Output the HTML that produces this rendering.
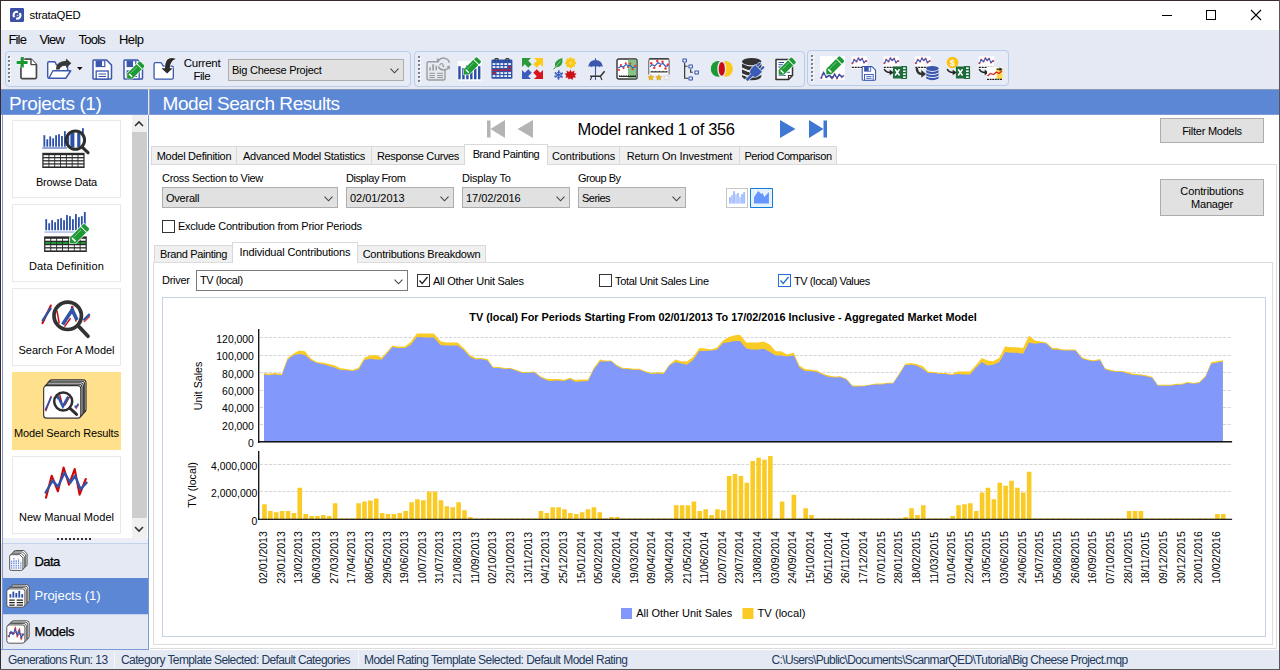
<!DOCTYPE html>
<html><head><meta charset="utf-8"><title>strataQED</title>
<style>
*{box-sizing:border-box;margin:0;padding:0}
html,body{width:1280px;height:670px;overflow:hidden;background:#fff}
body{font-family:"Liberation Sans",sans-serif;font-size:11px;color:#000;position:relative}
.abs{position:absolute}
.t{position:absolute;white-space:nowrap;line-height:1}
#win{position:absolute;left:0;top:0;width:1280px;height:670px;background:#e4e9f3;border-left:1px solid #3a2a2a;border-top:1px solid #3a2a2a}
#titlebar{position:absolute;left:1px;top:1px;width:1278px;height:29px;background:#fff}
#menubar{position:absolute;left:1px;top:30px;width:1278px;height:20px;background:#e4e9f3}
.menu{position:absolute;top:33.4px;font-size:13px;line-height:1;white-space:nowrap}
#toolbar{position:absolute;left:1px;top:50px;width:1278px;height:39px;background:#e4e9f3}
.tbgroup{position:absolute;top:51px;height:36px;border:1px solid #b9cce8;border-radius:4px;background:#e6ebf5}
.grip{position:absolute;top:56px;width:3px;height:27px;background-image:linear-gradient(#7b808e 50%,transparent 50%),linear-gradient(#fff 50%,transparent 50%);background-size:2px 4px,2px 4px;background-position:0 0,1px 1px;background-repeat:repeat-y}
.hdr{position:absolute;top:89px;height:26px;background:linear-gradient(#8d99bb 0,#8d99bb 1px,#5b87d5 1px,#5b87d5 25px,#7c9ad6 25px);color:#fff;font-size:19px;line-height:29px;overflow:hidden;white-space:nowrap}
.ax{font-family:"Liberation Sans",sans-serif;font-size:10.67px;fill:#000}
.ttl{font-family:"Liberation Sans",sans-serif;font-size:10.85px;font-weight:bold;fill:#000}
.item{position:absolute;left:12px;width:109px;height:78px;border:1px solid #e9e9e9;background:#fff}
.item .lbl{position:absolute;left:0;width:100%;top:55px;text-align:center;font-size:11px;line-height:1;white-space:nowrap}
.navbtn{position:absolute;left:3px;width:145px;height:36px;background:#e4e9f3;border-top:1px solid #c3d3ea;font-size:13px}
.navbtn span{position:absolute;left:31.5px;top:10.8px;line-height:1;white-space:nowrap}
.tab{position:absolute;height:18px;top:146px;border:1px solid #d9d9d9;border-bottom:none;background:#f0f0f0;font-size:11px;line-height:1;white-space:nowrap;text-align:center;padding-top:3.5px}
.tab.sel{background:#fff;top:144px;height:21px;z-index:3;padding-top:4px}
.combo{position:absolute;height:21px;border:1px solid #adadad;background:#e1e1e1;font-size:11px}
.combo span{position:absolute;left:3px;top:5px;line-height:1;white-space:nowrap}
.combo svg{position:absolute;right:4.5px;top:7.5px}
.btn{position:absolute;border:1px solid #adadad;background:#e1e1e1;font-size:11px;text-align:center;line-height:13px}
.cb{position:absolute;width:13px;height:13px;border:1px solid #333;background:#fff}
.sb{position:absolute;top:654px;font-size:12px;color:#1e395b;line-height:1;white-space:nowrap}
</style></head>
<body>
<div id="win"></div>
<div id="titlebar"></div>
<!-- app icon -->
<svg class="abs" style="left:10px;top:8px" width="14" height="14" viewBox="0 0 14 14"><rect width="14" height="14" rx="1.2" fill="#3b4fa6"/><circle cx="7" cy="7.2" r="3.5" fill="none" stroke="#fff" stroke-width="2.1"/><path d="M7.2 0.5 L11.6 4.6 L8.4 5.6 Z M6.8 13.8 L2.4 9.8 L5.6 8.8 Z" fill="#3b4fa6"/><circle cx="7.6" cy="7.4" r="0.9" fill="#fff" opacity="0.7"/></svg>
<div class="t" style="letter-spacing:-0.193px;left:29.5px;top:10px;font-size:11.3px">strataQED</div>
<!-- window controls -->
<svg class="abs" style="left:1150px;top:5px" width="125" height="20" viewBox="0 0 125 20"><path d="M12 10.5H22" stroke="#000" stroke-width="1"/><rect x="56.5" y="5.5" width="9" height="9" fill="none" stroke="#000" stroke-width="1"/><path d="M101 5L111 15M111 5L101 15" stroke="#000" stroke-width="1.1"/></svg>

<div id="menubar"></div>
<div class="menu" style="letter-spacing:-0.863px;left:8.5px">File</div>
<div class="menu" style="letter-spacing:-0.863px;left:39.5px">View</div>
<div class="menu" style="letter-spacing:-0.772px;left:78.5px">Tools</div>
<div class="menu" style="letter-spacing:-0.562px;left:119px">Help</div>

<div id="toolbar"></div>
<div class="tbgroup" style="left:5px;width:406px"></div>
<div class="tbgroup" style="left:414px;width:391px"></div>
<div class="tbgroup" style="left:807px;top:50px;width:202px"></div>
<div class="grip" style="left:8px"></div>
<div class="grip" style="left:417.5px"></div>
<div class="grip" style="left:811px;top:55px"></div>
<svg class="abs" style="left:16px;top:56px" width="24" height="25" viewBox="0 0 24 25"><path d="M4.95 3.1 H15 L20.45 8.6 V21.2 Q20.45 22.65 19 22.65 H6.4 Q4.95 22.65 4.95 21.2 Z" fill="#fff" stroke="#484848" stroke-width="1.7" stroke-linejoin="round"/><path d="M15 3.1 V8.6 H20.45" fill="#fff" stroke="#484848" stroke-width="1.4" stroke-linejoin="round"/><path d="M6.3 1 V11.6 M0.7 6.45 H11.6" stroke="#fff" stroke-width="4.2" opacity="0.8"/><path d="M6.3 1 V11.6 M0.7 6.45 H11.6" stroke="#1a9a2e" stroke-width="3"/></svg>
<svg class="abs" style="left:46px;top:56px" width="28" height="25" viewBox="0 0 28 25"><path d="M2.9 22.2 Q1.7 22 1.7 20.5 V6.9 Q1.7 5.7 2.9 5.7 H8 Q9 5.7 9.4 6.6 L10.4 9 H20.4 Q21.6 9 21.6 10.2 V15" fill="#fff" stroke="#3a57ad" stroke-width="1.4" stroke-linejoin="round"/><path d="M2.9 22.25 L6.9 14.75 H24.75 L19.75 22.25 Z" fill="#fff" stroke="#3a57ad" stroke-width="1.4" stroke-linejoin="round"/><path d="M25.3 7.25 L20.1 2.4 V4.75 Q10.5 5 9.8 13.6 H13.6 Q14 9.6 20.1 9.4 V11.9 Z" fill="#383838"/></svg>
<svg class="abs" style="left:76.5px;top:67px" width="6" height="4" viewBox="0 0 6 4"><path d="M0 0 H5.6 L2.8 3.2 Z" fill="#111"/></svg>
<svg class="abs" style="left:92px;top:59px" width="21" height="21" viewBox="0 0 21 21"><path d="M1 1.8 Q1 1 1.8 1 H14.5 L19.5 6 V19.2 Q19.5 20 18.7 20 H1.8 Q1 20 1 19.2 Z" fill="#fff" stroke="#3a57ad" stroke-width="1.5" stroke-linejoin="round"/><rect x="3.6" y="1.5" width="9.8" height="6.6" fill="#3a57ad"/><rect x="10" y="2.2" width="2.2" height="4.8" fill="#fff"/><rect x="4.2" y="12" width="12" height="8" fill="#fff" stroke="#3a57ad" stroke-width="1.3"/><path d="M6.5 15 H14 M6.5 17.5 H14" stroke="#3a57ad" stroke-width="1.2"/></svg>
<svg class="abs" style="left:123px;top:58px" width="24" height="23" viewBox="0 0 24 23"><g transform="translate(0,1)"><path d="M1 1.8 Q1 1 1.8 1 H14.5 L19.5 6 V19.2 Q19.5 20 18.7 20 H1.8 Q1 20 1 19.2 Z" fill="#fff" stroke="#3a57ad" stroke-width="1.5" stroke-linejoin="round"/><rect x="3.6" y="1.5" width="9.8" height="6.6" fill="#3a57ad"/><rect x="10" y="2.2" width="2.2" height="4.8" fill="#fff"/><rect x="4.2" y="12" width="12" height="8" fill="#fff" stroke="#3a57ad" stroke-width="1.3"/><path d="M6.5 15 H14 M6.5 17.5 H14" stroke="#3a57ad" stroke-width="1.2"/></g><g transform="translate(4.2,20.7) scale(1) rotate(-45)"><path d="M0 0 L3.6 -3.6 L17 -3.6 L17 3.6 L3.6 3.6 Z" fill="#1e9a35" stroke="#fff" stroke-opacity="0.75" stroke-width="1.6" paint-order="stroke" stroke-linejoin="round"/><path d="M17.8 -3.6 H20 Q21.4 -3.6 21.4 -2.2 V2.2 Q21.4 3.6 20 3.6 H17.8 Z" fill="#1e9a35" stroke="#fff" stroke-opacity="0.75" stroke-width="1.6" paint-order="stroke"/><path d="M4.7 -1.5 V1.7" stroke="#fff" stroke-width="1.5" stroke-linecap="round"/><path d="M7 -1.4 H15" stroke="#fff" stroke-width="0.7" stroke-dasharray="0.9,0.5" opacity="0.9"/></g></svg>
<svg class="abs" style="left:153px;top:56px" width="24" height="25" viewBox="0 0 24 25"><path d="M1.05 8.2 Q1.05 6.65 2.6 6.65 H7.3 Q8.2 6.65 8.7 7.5 L10.2 10.05 H18.8 Q20.35 10.05 20.35 11.6 V21.5 Q20.35 23.05 18.8 23.05 H2.6 Q1.05 23.05 1.05 21.5 Z" fill="#fff" stroke="#3a57ad" stroke-width="1.3" stroke-linejoin="round"/><path d="M8.4 12.2 H12 Q11.8 3.5 17 2.2 Q20 1.6 22.9 3.1 Q17.2 4.5 16.8 12.2 H19.8 L14.1 17.4 Z" fill="#2c2c2c" stroke="#fff" stroke-opacity="0.6" stroke-width="1.2" paint-order="stroke"/></svg>
<svg class="abs" style="left:426px;top:56px" width="25" height="26" viewBox="0 0 25 26"><rect x="1" y="5.7" width="18" height="18.3" rx="1.8" fill="#e6eaf2" stroke="#9c9c9c" stroke-width="1.4"/><g fill="#9c9c9c"><rect x="3.3" y="11.3" width="1.5" height="3.2"/><rect x="6.3" y="8.3" width="1.7" height="6.2"/><rect x="9.5" y="9.7" width="1.4" height="4.8"/><rect x="3.3" y="16.8" width="5.5" height="1.1"/><rect x="3.3" y="19" width="5.5" height="1.1"/><rect x="3.3" y="21" width="5.5" height="1.1"/><rect x="11.2" y="16.8" width="5.8" height="1.1"/><rect x="11.2" y="19" width="5.8" height="1.1"/><rect x="11.2" y="21" width="5.8" height="1.1"/></g><circle cx="17.5" cy="7.9" r="5.2" fill="#e6eaf2"/><path d="M12.6 4.6 A6 6 0 0 1 23.4 6.8 M12.3 10.6 A6 6 0 0 0 22.6 11.6" fill="none" stroke="#9c9c9c" stroke-width="1.5"/><path d="M10.6 2.4 L14.4 3 L11.4 6.6 Z M23.9 9.6 L23.6 13.9 L20.6 10.6 Z" fill="#9c9c9c"/><path d="M13.5 9.5 Q14.5 7.2 16 7.6 Q17.4 8 16.6 10" fill="none" stroke="#9c9c9c" stroke-width="1.1"/><rect x="16.6" y="9.6" width="1.6" height="1.6" fill="#9c9c9c"/></svg>
<svg class="abs" style="left:457px;top:56px" width="26" height="26" viewBox="0 0 26 26"><rect x="0.7" y="5" width="23.8" height="19.7" fill="#fff"/><g fill="#2b4fa9"><rect x="1.27" y="10.20" width="2.45" height="13.10"/><rect x="5.21" y="12.10" width="2.45" height="11.20"/><rect x="9.15" y="9.10" width="2.45" height="14.20"/><rect x="13.09" y="11.00" width="2.45" height="12.30"/><rect x="17.03" y="12.50" width="2.45" height="10.80"/><rect x="20.97" y="10.20" width="2.45" height="13.10"/></g><g transform="translate(6.9,18.4) scale(1) rotate(-45)"><path d="M0 0 L3.6 -3.6 L17 -3.6 L17 3.6 L3.6 3.6 Z" fill="#1e9a35" stroke="#fff" stroke-opacity="0.75" stroke-width="1.6" paint-order="stroke" stroke-linejoin="round"/><path d="M17.8 -3.6 H20 Q21.4 -3.6 21.4 -2.2 V2.2 Q21.4 3.6 20 3.6 H17.8 Z" fill="#1e9a35" stroke="#fff" stroke-opacity="0.75" stroke-width="1.6" paint-order="stroke"/><path d="M4.7 -1.5 V1.7" stroke="#fff" stroke-width="1.5" stroke-linecap="round"/><path d="M7 -1.4 H15" stroke="#fff" stroke-width="0.7" stroke-dasharray="0.9,0.5" opacity="0.9"/></g></svg>
<svg class="abs" style="left:490.5px;top:58px" width="22" height="22" viewBox="0 0 22 22"><rect x="0.4" y="1.6" width="21" height="19.2" rx="1.2" fill="#2f52ab"/><path d="M3.9 3 V1.3 Q3.9 0.6 4.6 0.6 H6.4 Q7.1 0.6 7.1 1.3 V3 M14.7 3 V1.3 Q14.7 0.6 15.4 0.6 H17.2 Q17.9 0.6 17.9 1.3 V3" fill="none" stroke="#333" stroke-width="1.1"/><rect x="1.6" y="5.2" width="2.8" height="1.7" fill="#fff"/><rect x="5.5" y="5.2" width="2.8" height="1.7" fill="#fff"/><rect x="9.4" y="5.2" width="2.8" height="1.7" fill="#fff"/><rect x="13.3" y="5.2" width="2.8" height="1.7" fill="#fff"/><rect x="17.2" y="5.2" width="2.8" height="1.7" fill="#fff"/><rect x="1.6" y="8.2" width="2.8" height="1.7" fill="#fff"/><rect x="5.5" y="8.2" width="2.8" height="1.7" fill="#fff"/><rect x="9.4" y="8.2" width="2.8" height="1.7" fill="#fff"/><rect x="13.3" y="8.2" width="2.8" height="1.7" fill="#fff"/><rect x="17.2" y="8.2" width="2.8" height="1.7" fill="#d8141c"/><rect x="1.6" y="11.2" width="2.8" height="1.7" fill="#d8141c"/><rect x="5.5" y="11.2" width="2.8" height="1.7" fill="#d8141c"/><rect x="9.4" y="11.2" width="2.8" height="1.7" fill="#d8141c"/><rect x="13.3" y="11.2" width="2.8" height="1.7" fill="#d8141c"/><rect x="17.2" y="11.2" width="2.8" height="1.7" fill="#d8141c"/><rect x="1.6" y="14.2" width="2.8" height="1.7" fill="#d8141c"/><rect x="5.5" y="14.2" width="2.8" height="1.7" fill="#fff"/><rect x="9.4" y="14.2" width="2.8" height="1.7" fill="#fff"/><rect x="13.3" y="14.2" width="2.8" height="1.7" fill="#fff"/><rect x="17.2" y="14.2" width="2.8" height="1.7" fill="#fff"/><rect x="1.6" y="17.2" width="2.8" height="1.7" fill="#fff"/><rect x="5.5" y="17.2" width="2.8" height="1.7" fill="#fff"/><rect x="9.4" y="17.2" width="2.8" height="1.7" fill="#fff"/><rect x="13.3" y="17.2" width="2.8" height="1.7" fill="#fff"/><rect x="17.2" y="17.2" width="2.8" height="1.7" fill="#fff"/></svg>
<svg class="abs" style="left:521px;top:57px" width="23" height="23" viewBox="0 0 23 23"><g transform="translate(11.5,11.5) rotate(0)"><path d="M-10.5 -10.5 H-1.5 L-4.3 -7.7 L-0.8 -4.2 L-4.2 -0.8 L-7.7 -4.3 L-10.5 -1.5 Z" fill="#2c9a3b"/></g><g transform="translate(11.5,11.5) rotate(90)"><path d="M-10.5 -10.5 H-1.5 L-4.3 -7.7 L-0.8 -4.2 L-4.2 -0.8 L-7.7 -4.3 L-10.5 -1.5 Z" fill="#fcc916"/></g><g transform="translate(11.5,11.5) rotate(180)"><path d="M-10.5 -10.5 H-1.5 L-4.3 -7.7 L-0.8 -4.2 L-4.2 -0.8 L-7.7 -4.3 L-10.5 -1.5 Z" fill="#d8141c"/></g><g transform="translate(11.5,11.5) rotate(270)"><path d="M-10.5 -10.5 H-1.5 L-4.3 -7.7 L-0.8 -4.2 L-4.2 -0.8 L-7.7 -4.3 L-10.5 -1.5 Z" fill="#3a5cbd"/></g></svg>
<svg class="abs" style="left:553px;top:57px" width="24" height="24" viewBox="0 0 24 24"><path d="M2.2 10.6 Q0.2 3.4 9.3 0.9 Q11 9.6 2.2 10.6 Z" fill="#2c9a3b"/><path d="M0.6 12.4 L7.8 3.6" stroke="#2c9a3b" stroke-width="1"/><path d="M2.6 10 L7.8 3.6" stroke="#bfe3c4" stroke-width="0.6"/><circle cx="21.80" cy="5.90" r="1.35" fill="#fcc916"/><circle cx="20.57" cy="8.87" r="1.35" fill="#fcc916"/><circle cx="17.60" cy="10.10" r="1.35" fill="#fcc916"/><circle cx="14.63" cy="8.87" r="1.35" fill="#fcc916"/><circle cx="13.40" cy="5.90" r="1.35" fill="#fcc916"/><circle cx="14.63" cy="2.93" r="1.35" fill="#fcc916"/><circle cx="17.60" cy="1.70" r="1.35" fill="#fcc916"/><circle cx="20.57" cy="2.93" r="1.35" fill="#fcc916"/><circle cx="17.6" cy="5.9" r="4.4" fill="#fcc916"/><circle cx="17.6" cy="5.9" r="2.5" fill="#fdd94a" stroke="#f2b600" stroke-width="0.6"/><g stroke="#3a5cbd" stroke-width="1.15" fill="none"><path d="M5.70 22.70 L5.70 13.30"/><path d="M1.63 20.35 L9.77 15.65"/><path d="M1.63 15.65 L9.77 20.35"/><path d="M8.60 18.00 L7.15 20.51 L4.25 20.51 L2.80 18.00 L4.25 15.49 L7.15 15.49 Z" stroke-width="0.9"/><path d="M9.42 20.15 L5.70 22.30 L1.98 20.15 L1.98 15.85 L5.70 13.70 L9.42 15.85 Z" stroke-width="0.8" stroke-dasharray="1.6,2.7"/></g><path d="M17.5 12.7 L18.8 15 L21.6 13.4 L21 16.2 L23.6 16.6 L21.8 18.6 L23 20.6 L20 20.4 L19.6 23 L17.5 21.4 L15.4 22.6 L15.2 20.4 L12.4 20.8 L13.4 18.6 L11.6 16.8 L14 16.3 L13.4 13.6 L16.2 15 Z" fill="#cc1018"/></svg>
<svg class="abs" style="left:587px;top:57px" width="20" height="24" viewBox="0 0 20 24"><path d="M1.2 10 Q2 3.2 8.5 3 Q15 3.2 15.8 10 Q14.2 8.6 12.6 10 Q10.5 8.4 8.5 10 Q6.5 8.4 4.4 10 Q2.8 8.6 1.2 10Z" fill="#3a57ad"/><path d="M8.5 1.2 V3" stroke="#3a57ad" stroke-width="1.1"/><path d="M8.5 9.5 V23" stroke="#3a57ad" stroke-width="1.1"/><path d="M3.2 19.2 H13.5 L17.6 14.2" fill="none" stroke="#333" stroke-width="1.5"/><path d="M4.8 19.4 L3.4 23 M13.3 19.4 L15 23" stroke="#333" stroke-width="1.1"/></svg>
<svg class="abs" style="left:616px;top:58px" width="22" height="22" viewBox="0 0 22 22"><rect x="1" y="1" width="20" height="20" rx="1.8" fill="#fff" stroke="#333" stroke-width="1.4"/><rect x="12" y="1.7" width="8.3" height="18.6" fill="#86c486"/><circle cx="3" cy="12" r="1.05" fill="#f03030"/><circle cx="4.9" cy="7.1" r="1.05" fill="#f03030"/><circle cx="7.5" cy="10.1" r="1.05" fill="#f03030"/><circle cx="9.75" cy="5.25" r="1.05" fill="#f03030"/><circle cx="12" cy="9" r="1.05" fill="#f03030"/><circle cx="14.25" cy="5.6" r="1.05" fill="#f03030"/><circle cx="16.5" cy="11.25" r="1.05" fill="#f03030"/><circle cx="19.1" cy="7.9" r="1.05" fill="#f03030"/><path d="M2.25 10.1 L5.25 8.25 L7.5 9 L10.1 6.4 L12.4 7.9 L14.25 7.1 L16.5 9.75 L19.5 9" fill="none" stroke="#3a5cbd" stroke-width="1.15"/><path d="M3 18.4 H19.9" stroke="#222" stroke-width="1.1"/><path d="M3.3 17.3 V18.4 M5.6 17.3 V18.4 M7.9 17.3 V18.4 M10.2 17.3 V18.4 M12.5 17.3 V18.4 M14.8 17.3 V18.4 M17.1 17.3 V18.4 M19.4 17.3 V18.4" stroke="#222" stroke-width="0.9"/></svg>
<svg class="abs" style="left:647px;top:57px" width="24" height="24" viewBox="0 0 24 24"><rect x="1.7" y="1.8" width="20.5" height="15.6" fill="#fff"/><path d="M1.8 17.5 V3 Q1.8 1.9 2.9 1.9 H21 Q22.1 1.9 22.1 3 V17.5" fill="none" stroke="#555" stroke-width="1"/><path d="M2.2 1.8 H21.7" stroke="#333" stroke-width="1.3"/><circle cx="4.25" cy="6.25" r="1.2" fill="#f03030"/><circle cx="7.25" cy="10.75" r="1.2" fill="#f03030"/><circle cx="10.25" cy="4" r="1.2" fill="#f03030"/><circle cx="12.9" cy="8.9" r="1.2" fill="#f03030"/><circle cx="15.5" cy="4.75" r="1.2" fill="#f03030"/><circle cx="18.5" cy="11.5" r="1.2" fill="#f03030"/><circle cx="20.75" cy="7.75" r="1.2" fill="#f03030"/><path d="M3.1 9.6 L5 7.75 L8 8.9 L11 5.5 L14 7.4 L15.9 6.25 L18.5 9.25 L21.1 8.9" fill="none" stroke="#3a5cbd" stroke-width="1.2"/><path d="M3.5 14.9 H20.5" stroke="#222" stroke-width="1.1"/><path d="M5 13.9 V14.9 M8.7 13.9 V14.9 M12.4 13.9 V14.9 M16.1 13.9 V14.9 M19.8 13.9 V14.9" stroke="#222" stroke-width="0.9"/><path transform="translate(3.9,20.6)" d="M0 -2.9 L0.85 -0.95 L2.9 -0.85 L1.35 0.5 L1.85 2.5 L0 1.45 L-1.85 2.5 L-1.35 0.5 L-2.9 -0.85 L-0.85 -0.95 Z" fill="#f5b800" stroke="#c89000" stroke-width="0.5"/><path transform="translate(11.75,20.6)" d="M0 -2.9 L0.85 -0.95 L2.9 -0.85 L1.35 0.5 L1.85 2.5 L0 1.45 L-1.85 2.5 L-1.35 0.5 L-2.9 -0.85 L-0.85 -0.95 Z" fill="#f5b800" stroke="#c89000" stroke-width="0.5"/><path transform="translate(19.6,20.6)" d="M0 -2.9 L0.85 -0.95 L2.9 -0.85 L1.35 0.5 L1.85 2.5 L0 1.45 L-1.85 2.5 L-1.35 0.5 L-2.9 -0.85 L-0.85 -0.95 Z" fill="#fff" stroke="#c4c4c4" stroke-width="0.5"/></svg>
<svg class="abs" style="left:682px;top:57px" width="18" height="25" viewBox="0 0 18 25"><path d="M2.65 6 V21.25 H6 M2.65 9.25 H5.6 M8.65 12.2 V15.25 H10.8" fill="none" stroke="#333" stroke-width="1.15"/><g fill="#fff" stroke="#2f52ab" stroke-width="1.1"><rect x="0.95" y="1.95" width="3.4" height="3.1" rx="0.2"/><rect x="6.95" y="7.95" width="3.4" height="3.1" rx="0.2"/><rect x="12.95" y="13.95" width="3.4" height="3.1" rx="0.2"/><rect x="6.95" y="19.95" width="3.4" height="3.1" rx="0.2"/></g></svg>
<svg class="abs" style="left:710px;top:60px" width="24" height="18" viewBox="0 0 24 18"><ellipse cx="8.2" cy="8.9" rx="7.4" ry="7.9" fill="#1e9a35"/><ellipse cx="15.4" cy="8.9" rx="7.4" ry="7.9" fill="#fcc916"/><ellipse cx="11.8" cy="8.9" rx="4.5" ry="8.8" fill="#e6ebf5"/><ellipse cx="11.8" cy="8.9" rx="3.1" ry="6.8" fill="#cc0c14"/></svg>
<svg class="abs" style="left:741px;top:57px" width="24" height="24" viewBox="0 0 24 24"><g fill="#333"><ellipse cx="10.7" cy="4.6" rx="9.7" ry="3.7"/><path d="M1 6.8 Q10.7 12.2 20.4 6.8 V10.6 Q10.7 16 1 10.6Z"/><path d="M1 12.4 Q10.7 17.8 20.4 12.4 V16.2 Q10.7 21.6 1 16.2Z"/><path d="M1 18 Q10.7 23.4 20.4 18 V19.6 Q19.4 23.2 10.7 23.2 Q2 23.2 1 19.6Z"/></g><g transform="translate(14.6,14.3) rotate(45) scale(1.15)" fill="#3a5cb5" stroke="#e6ebf5" stroke-width="1.1" paint-order="stroke"><rect x="-3.2" y="-8" width="1.9" height="5" rx="0.5"/><rect x="1.3" y="-8" width="1.9" height="5" rx="0.5"/><path d="M-4.3 -3.6 H4.3 V0.5 Q4.3 4.2 1.2 4.6 V11 H-1.2 V4.6 Q-4.3 4.2 -4.3 0.5 Z"/></g></svg>
<svg class="abs" style="left:775px;top:56px" width="24" height="25" viewBox="0 0 24 25"><path d="M1 3.5 H17.5 V19.5 L13.5 23.5 H1 Z" fill="#fff" stroke="#333" stroke-width="1.5" stroke-linejoin="round"/><path d="M17.5 19.5 H13.5 V23.5" fill="none" stroke="#333" stroke-width="1.2"/><path d="M3.5 6.5 H9 M3.5 8.8 H8 M3.5 11.1 H7 M3.5 19.5 H10.5 M11 16.2 H15" stroke="#2b4fa9" stroke-width="1.1"/><g transform="translate(3.7,18.8) scale(1) rotate(-45)"><path d="M0 0 L3.6 -3.6 L17 -3.6 L17 3.6 L3.6 3.6 Z" fill="#1e9a35" stroke="#fff" stroke-opacity="0.75" stroke-width="1.6" paint-order="stroke" stroke-linejoin="round"/><path d="M17.8 -3.6 H20 Q21.4 -3.6 21.4 -2.2 V2.2 Q21.4 3.6 20 3.6 H17.8 Z" fill="#1e9a35" stroke="#fff" stroke-opacity="0.75" stroke-width="1.6" paint-order="stroke"/><path d="M4.7 -1.5 V1.7" stroke="#fff" stroke-width="1.5" stroke-linecap="round"/><path d="M7 -1.4 H15" stroke="#fff" stroke-width="0.7" stroke-dasharray="0.9,0.5" opacity="0.9"/></g></svg>
<svg class="abs" style="left:819.5px;top:55.5px" width="25" height="24.5" viewBox="0 0 25 24.5"><rect x="0" y="0" width="25" height="24.5" fill="#fff"/><path d="M1 22.5 L3.5 16.5 L6.5 21.5 L9.5 19 L12 22.5 L14.5 18.5 L17 22 L19.5 18.5 L22 21 L24 19.5" fill="none" stroke="#e02020" stroke-width="2.2" stroke-dasharray="1.4,2.2" opacity="0.8"/><path d="M1 22.5 L3.5 16.5 L6.5 21.5 L9.5 19 L12 22.5 L14.5 18.5 L17 22 L19.5 18.5 L22 21 L24 19.5" fill="none" stroke="#2a4fb0" stroke-width="1.3"/><g transform="translate(6.3,18.2) scale(1.04) rotate(-45)"><path d="M0 0 L3.6 -3.6 L17 -3.6 L17 3.6 L3.6 3.6 Z" fill="#1e9a35" stroke="#fff" stroke-opacity="0.75" stroke-width="1.6" paint-order="stroke" stroke-linejoin="round"/><path d="M17.8 -3.6 H20 Q21.4 -3.6 21.4 -2.2 V2.2 Q21.4 3.6 20 3.6 H17.8 Z" fill="#1e9a35" stroke="#fff" stroke-opacity="0.75" stroke-width="1.6" paint-order="stroke"/><path d="M4.7 -1.5 V1.7" stroke="#fff" stroke-width="1.5" stroke-linecap="round"/><path d="M7 -1.4 H15" stroke="#fff" stroke-width="0.7" stroke-dasharray="0.9,0.5" opacity="0.9"/></g></svg>
<svg class="abs" style="left:851px;top:56px" width="27" height="25" viewBox="0 0 27 25"><g transform="translate(0.5,0.3) scale(1.05)"><rect x="0" y="0" width="15" height="12" fill="#fff"/><circle cx="0.85" cy="6.6" r="1" fill="#f03030"/><circle cx="2.6" cy="3.4" r="1" fill="#f03030"/><circle cx="4.8" cy="4.9" r="1" fill="#f03030"/><circle cx="6.6" cy="2" r="1" fill="#f03030"/><circle cx="8.3" cy="3.8" r="1" fill="#f03030"/><circle cx="10.1" cy="2.3" r="1" fill="#f03030"/><circle cx="11.9" cy="5.9" r="1" fill="#f03030"/><circle cx="14" cy="4.5" r="1" fill="#f03030"/><path d="M0.85 6.6 L2.6 3.4 L4.8 4.9 L6.6 2 L8.3 3.8 L10.1 2.3 L11.9 5.9 L14 4.5" fill="none" stroke="#3a5cbd" stroke-width="1.1"/><path d="M0.3 10.6 H14.7" stroke="#222" stroke-width="1.1" stroke-dasharray="2,0.7"/></g><g transform="translate(10.5,9.8) scale(0.72)"><path d="M1 1.8 Q1 1 1.8 1 H14.5 L19.5 6 V19.2 Q19.5 20 18.7 20 H1.8 Q1 20 1 19.2 Z" fill="#fff" stroke="#3a57ad" stroke-width="1.5" stroke-linejoin="round"/><rect x="3.6" y="1.5" width="9.8" height="6.6" fill="#3a57ad"/><rect x="10" y="2.2" width="2.2" height="4.8" fill="#fff"/><rect x="4.2" y="12" width="12" height="8" fill="#fff" stroke="#3a57ad" stroke-width="1.3"/><path d="M6.5 15 H14 M6.5 17.5 H14" stroke="#3a57ad" stroke-width="1.2"/></g></svg>
<svg class="abs" style="left:883px;top:56px" width="26" height="26" viewBox="0 0 26 26"><g transform="translate(0.5,0.3) scale(1.05)"><rect x="0" y="0" width="15" height="12" fill="#fff"/><circle cx="0.85" cy="6.6" r="1" fill="#f03030"/><circle cx="2.6" cy="3.4" r="1" fill="#f03030"/><circle cx="4.8" cy="4.9" r="1" fill="#f03030"/><circle cx="6.6" cy="2" r="1" fill="#f03030"/><circle cx="8.3" cy="3.8" r="1" fill="#f03030"/><circle cx="10.1" cy="2.3" r="1" fill="#f03030"/><circle cx="11.9" cy="5.9" r="1" fill="#f03030"/><circle cx="14" cy="4.5" r="1" fill="#f03030"/><path d="M0.85 6.6 L2.6 3.4 L4.8 4.9 L6.6 2 L8.3 3.8 L10.1 2.3 L11.9 5.9 L14 4.5" fill="none" stroke="#3a5cbd" stroke-width="1.1"/><path d="M0.3 10.6 H14.7" stroke="#222" stroke-width="1.1" stroke-dasharray="2,0.7"/></g><g transform="translate(1.2,12.5)"><path d="M0 0.5 Q1.5 4 6 4" fill="none" stroke="#222" stroke-width="1.5"/><path d="M5.5 1.2 L9.5 4 L5.5 6.8 Z" fill="#222"/></g><g transform="translate(9.9,9.1)"><path d="M8.3 0.8 H13.4 Q14.2 0.8 14.2 1.6 V13.1 Q14.2 13.9 13.4 13.9 H8.3 Z" fill="#1d6b3a"/><rect x="0" y="1.5" width="9.4" height="11.8" rx="0.6" fill="#1d6b3a"/><path d="M2.2 4.2 L6.6 10.4 M6.6 4.2 L2.2 10.4" stroke="#fff" stroke-width="1.5"/><g fill="#fff"><rect x="10.2" y="2.3" width="2.6" height="1.6"/><rect x="10.2" y="5.3" width="2.6" height="1.6"/><rect x="10.2" y="8.3" width="2.6" height="1.6"/><rect x="10.2" y="11.3" width="2.6" height="1.6"/></g></g></svg>
<svg class="abs" style="left:914px;top:56px" width="26" height="26" viewBox="0 0 26 26"><g transform="translate(1,0.3) scale(1.05)"><rect x="0" y="0" width="15" height="12" fill="#fff"/><circle cx="0.85" cy="6.6" r="1" fill="#f03030"/><circle cx="2.6" cy="3.4" r="1" fill="#f03030"/><circle cx="4.8" cy="4.9" r="1" fill="#f03030"/><circle cx="6.6" cy="2" r="1" fill="#f03030"/><circle cx="8.3" cy="3.8" r="1" fill="#f03030"/><circle cx="10.1" cy="2.3" r="1" fill="#f03030"/><circle cx="11.9" cy="5.9" r="1" fill="#f03030"/><circle cx="14" cy="4.5" r="1" fill="#f03030"/><path d="M0.85 6.6 L2.6 3.4 L4.8 4.9 L6.6 2 L8.3 3.8 L10.1 2.3 L11.9 5.9 L14 4.5" fill="none" stroke="#3a5cbd" stroke-width="1.1"/><path d="M0.3 10.6 H14.7" stroke="#222" stroke-width="1.1" stroke-dasharray="2,0.7"/></g><path d="M2.8 12 Q2.8 18.3 8.5 18" fill="none" stroke="#333" stroke-width="2.4"/><path d="M7.3 14 L12 18 L7.3 21.8 Z" fill="#333"/><g fill="#3a57ad"><ellipse cx="18.4" cy="12.4" rx="6.2" ry="2.5"/><path d="M12.2 14.3 Q18.4 17.5 24.6 14.3 V16.4 Q18.4 19.6 12.2 16.4 Z"/><path d="M12.2 17.4 Q18.4 20.6 24.6 17.4 V19.5 Q18.4 22.7 12.2 19.5 Z"/><path d="M12.2 20.5 Q18.4 23.7 24.6 20.5 V22.6 Q18.4 25.8 12.2 22.6 Z"/></g></svg>
<svg class="abs" style="left:946px;top:56px" width="26" height="26" viewBox="0 0 26 26"><circle cx="6.5" cy="6.5" r="5.8" fill="#fcc20e"/><text x="6.5" y="10" text-anchor="middle" font-family="Liberation Sans" font-weight="bold" font-size="9.5" fill="#fff">$</text><g transform="translate(1.2,12.5)"><path d="M0 0.5 Q1.5 4 6 4" fill="none" stroke="#222" stroke-width="1.5"/><path d="M5.5 1.2 L9.5 4 L5.5 6.8 Z" fill="#222"/></g><g transform="translate(9.9,9.1)"><path d="M8.3 0.8 H13.4 Q14.2 0.8 14.2 1.6 V13.1 Q14.2 13.9 13.4 13.9 H8.3 Z" fill="#1d6b3a"/><rect x="0" y="1.5" width="9.4" height="11.8" rx="0.6" fill="#1d6b3a"/><path d="M2.2 4.2 L6.6 10.4 M6.6 4.2 L2.2 10.4" stroke="#fff" stroke-width="1.5"/><g fill="#fff"><rect x="10.2" y="2.3" width="2.6" height="1.6"/><rect x="10.2" y="5.3" width="2.6" height="1.6"/><rect x="10.2" y="8.3" width="2.6" height="1.6"/><rect x="10.2" y="11.3" width="2.6" height="1.6"/></g></g></svg>
<svg class="abs" style="left:977.5px;top:56px" width="26" height="25" viewBox="0 0 26 25"><g transform="translate(0.5,0.3) scale(1.05)"><rect x="0" y="0" width="15" height="12" fill="#fff"/><circle cx="0.85" cy="6.6" r="1" fill="#f03030"/><circle cx="2.6" cy="3.4" r="1" fill="#f03030"/><circle cx="4.8" cy="4.9" r="1" fill="#f03030"/><circle cx="6.6" cy="2" r="1" fill="#f03030"/><circle cx="8.3" cy="3.8" r="1" fill="#f03030"/><circle cx="10.1" cy="2.3" r="1" fill="#f03030"/><circle cx="11.9" cy="5.9" r="1" fill="#f03030"/><circle cx="14" cy="4.5" r="1" fill="#f03030"/><path d="M0.85 6.6 L2.6 3.4 L4.8 4.9 L6.6 2 L8.3 3.8 L10.1 2.3 L11.9 5.9 L14 4.5" fill="none" stroke="#3a5cbd" stroke-width="1.1"/><path d="M0.3 10.6 H14.7" stroke="#222" stroke-width="1.1" stroke-dasharray="2,0.7"/></g><g transform="translate(1.2,12.5)"><path d="M0 0.5 Q1.5 4 6 4" fill="none" stroke="#222" stroke-width="1.5"/><path d="M5.5 1.2 L9.5 4 L5.5 6.8 Z" fill="#222"/></g><rect x="9" y="11" width="15.5" height="13" fill="#fff"/><rect x="18.5" y="12" width="6" height="11" fill="#fcd84a"/><path d="M9.5 20 L12.5 17.5 L15.5 18.5 L18.5 16 L21 17.5 L24 15" fill="none" stroke="#e02020" stroke-width="1.3"/><path d="M18.5 13.2 H22" stroke="#222" stroke-width="1.2"/><path d="M21.5 11.2 L24.5 13.2 L21.5 15.2Z" fill="#222"/><path d="M9 23.3 H24.5" stroke="#222" stroke-width="1.3" stroke-dasharray="2,0.6"/></svg>
<div class="t" style="letter-spacing:-0.223px;left:183.7px;top:58px;font-size:11.5px">Current</div><div class="t" style="letter-spacing:-0.533px;left:193.6px;top:70.5px;font-size:11.5px">File</div>
<div class="combo" style="left:228px;top:59px;width:176px;height:22px"><span style="letter-spacing:-0.254px;top:5px;font-size:11px">Big Cheese Project</span><svg width="9" height="6" viewBox="0 0 9 6"><path d="M0.5 0.6L4.5 4.8L8.5 0.6" fill="none" stroke="#404040" stroke-width="1.05"/></svg></div>

<!-- headers -->
<div class="hdr" style="left:1px;width:147px;padding-left:8px"><span style="letter-spacing:-0.387px">Projects (1)</span></div>
<div class="hdr" style="left:150px;width:1129px;padding-left:12.5px"><span style="letter-spacing:-0.434px">Model Search Results</span></div>

<!-- left panel -->
<div class="abs" style="left:1px;top:115px;width:147px;height:428px;background:#fff"></div><div class="abs" style="left:3px;top:538px;width:145px;height:6px;background:#eceff7"></div>
<div class="abs" style="left:148px;top:89px;width:2px;height:26px;background:#dfe6f3"></div><div class="abs" style="left:149px;top:89px;width:1px;height:26px;background:#9aa3b5"></div>
<div class="abs" style="left:148px;top:115px;width:1px;height:535px;background:#7a9ad8;z-index:5"></div>
<div class="abs" style="left:2px;top:115px;width:1px;height:535px;background:#7a9ad8"></div>
<div class="abs" style="left:1px;top:649px;width:147px;height:1px;background:#7a9ad8"></div>
<!-- scrollbar -->
<div class="abs" style="left:132px;top:115px;width:15px;height:424px;background:#f0f0f0"></div>
<div class="abs" style="left:132px;top:132px;width:15px;height:386px;background:#cdcdcd"></div>
<svg class="abs" style="left:134px;top:120px" width="10" height="8" viewBox="0 0 10 8"><path d="M1 6L5 2L9 6" fill="none" stroke="#333" stroke-width="1.6"/></svg>
<svg class="abs" style="left:134px;top:525px" width="10" height="8" viewBox="0 0 10 8"><path d="M1 2L5 6L9 2" fill="none" stroke="#333" stroke-width="1.6"/></svg>
<div class="abs" style="left:57px;top:538px;width:36px;height:2px;background-image:linear-gradient(90deg,#333 50%,transparent 50%);background-size:4px 2px"></div>

<div class="item" style="top:120px"><div class="lbl" style="letter-spacing:-0.162px;top:56.4px">Browse Data</div></div>
<div class="item" style="top:204px"><div class="lbl" style="letter-spacing:0.203px;top:56.4px">Data Definition</div></div>
<div class="item" style="top:288px"><div class="lbl" style="letter-spacing:-0.039px;top:55.8px">Search For A Model</div></div>
<div class="item" style="top:372px;background:#ffe08c;border-color:#ffe08c"><div class="lbl" style="letter-spacing:-0.140px">Model Search Results</div></div>
<div class="item" style="top:456px"><div class="lbl" style="letter-spacing:0.065px">New Manual Model</div></div>
<svg class="abs" style="left:40px;top:126px" width="52" height="44" viewBox="0 0 52 44"><rect x="3.45" y="9.20" width="1.8" height="11.50" fill="#2b4fa9"/><rect x="6.38" y="13.30" width="1.8" height="7.40" fill="#2b4fa9"/><rect x="9.31" y="10.40" width="1.8" height="10.30" fill="#2b4fa9"/><rect x="12.24" y="12.30" width="1.8" height="8.40" fill="#2b4fa9"/><rect x="15.17" y="9.20" width="1.8" height="11.50" fill="#2b4fa9"/><rect x="18.10" y="8.20" width="1.8" height="12.50" fill="#2b4fa9"/><rect x="21.03" y="10.00" width="1.8" height="10.70" fill="#2b4fa9"/><rect x="23.96" y="5.10" width="1.8" height="15.60" fill="#2b4fa9"/><rect x="42" y="2.2" width="1.8" height="18.5" fill="#2b4fa9"/><rect x="2.3" y="21.5" width="24.7" height="1" fill="#2b4fa9"/><rect x="2.3" y="26.8" width="42.3" height="15.2" fill="#2a2a2a"/><rect x="3.55" y="29.20" width="4.91" height="1.82" fill="#fff"/><rect x="9.36" y="29.20" width="4.91" height="1.82" fill="#fff"/><rect x="15.18" y="29.20" width="4.91" height="1.82" fill="#fff"/><rect x="20.99" y="29.20" width="4.91" height="1.82" fill="#fff"/><rect x="26.81" y="29.20" width="4.91" height="1.82" fill="#fff"/><rect x="32.62" y="29.20" width="4.91" height="1.82" fill="#fff"/><rect x="38.44" y="29.20" width="4.91" height="1.82" fill="#fff"/><rect x="3.55" y="32.33" width="4.91" height="1.82" fill="#fff"/><rect x="9.36" y="32.33" width="4.91" height="1.82" fill="#fff"/><rect x="15.18" y="32.33" width="4.91" height="1.82" fill="#fff"/><rect x="20.99" y="32.33" width="4.91" height="1.82" fill="#fff"/><rect x="26.81" y="32.33" width="4.91" height="1.82" fill="#fff"/><rect x="32.62" y="32.33" width="4.91" height="1.82" fill="#fff"/><rect x="38.44" y="32.33" width="4.91" height="1.82" fill="#fff"/><rect x="3.55" y="35.45" width="4.91" height="1.82" fill="#fff"/><rect x="9.36" y="35.45" width="4.91" height="1.82" fill="#fff"/><rect x="15.18" y="35.45" width="4.91" height="1.82" fill="#fff"/><rect x="20.99" y="35.45" width="4.91" height="1.82" fill="#fff"/><rect x="26.81" y="35.45" width="4.91" height="1.82" fill="#fff"/><rect x="32.62" y="35.45" width="4.91" height="1.82" fill="#fff"/><rect x="38.44" y="35.45" width="4.91" height="1.82" fill="#fff"/><rect x="3.55" y="38.57" width="4.91" height="1.82" fill="#fff"/><rect x="9.36" y="38.57" width="4.91" height="1.82" fill="#fff"/><rect x="15.18" y="38.57" width="4.91" height="1.82" fill="#fff"/><rect x="20.99" y="38.57" width="4.91" height="1.82" fill="#fff"/><rect x="26.81" y="38.57" width="4.91" height="1.82" fill="#fff"/><rect x="32.62" y="38.57" width="4.91" height="1.82" fill="#fff"/><rect x="38.44" y="38.57" width="4.91" height="1.82" fill="#fff"/><circle cx="35.4" cy="14.1" r="9.2" fill="#fff"/><clipPath id="lensclip"><circle cx="35.4" cy="14.1" r="8"/></clipPath><g clip-path="url(#lensclip)" fill="#2b4fa9"><rect x="27.2" y="6" width="2" height="15"/><rect x="30.4" y="4.5" width="4" height="17"/><rect x="37.2" y="4.5" width="3.2" height="17"/><rect x="43" y="6" width="2" height="15" opacity="0.4"/></g><circle cx="35.4" cy="14.1" r="9.2" fill="none" stroke="#2e2e2e" stroke-width="3"/><path d="M42.4 21.4 L48 26.7" stroke="#2e2e2e" stroke-width="3.2" stroke-linecap="round"/></svg>
<svg class="abs" style="left:42px;top:209px" width="52" height="46" viewBox="0 0 52 46"><rect x="3.30" y="10.15" width="1.8" height="11.10" fill="#2b4fa9"/><rect x="6.27" y="14.25" width="1.8" height="7.00" fill="#2b4fa9"/><rect x="9.24" y="11.15" width="1.8" height="10.10" fill="#2b4fa9"/><rect x="12.21" y="13.25" width="1.8" height="8.00" fill="#2b4fa9"/><rect x="15.18" y="10.15" width="1.8" height="11.10" fill="#2b4fa9"/><rect x="18.15" y="9.15" width="1.8" height="12.10" fill="#2b4fa9"/><rect x="21.12" y="11.15" width="1.8" height="10.10" fill="#2b4fa9"/><rect x="24.09" y="6.05" width="1.8" height="15.20" fill="#2b4fa9"/><rect x="27.06" y="7.15" width="1.8" height="14.10" fill="#2b4fa9"/><rect x="30.03" y="10.15" width="1.8" height="11.10" fill="#2b4fa9"/><rect x="33.00" y="5.05" width="1.8" height="16.20" fill="#2b4fa9"/><rect x="35.97" y="8.15" width="1.8" height="13.10" fill="#2b4fa9"/><rect x="38.94" y="7.15" width="1.8" height="14.10" fill="#2b4fa9"/><rect x="41.91" y="3.05" width="1.8" height="18.20" fill="#2b4fa9"/><rect x="2.4" y="22.4" width="30.3" height="1.3" fill="#9db2e6"/><rect x="2.1" y="27.4" width="42.7" height="15.6" fill="#2a2a2a"/><rect x="3.35" y="29.80" width="4.97" height="1.92" fill="#fff"/><rect x="9.22" y="29.80" width="4.97" height="1.92" fill="#fff"/><rect x="15.09" y="29.80" width="4.97" height="1.92" fill="#fff"/><rect x="20.96" y="29.80" width="4.97" height="1.92" fill="#fff"/><rect x="26.84" y="29.80" width="4.97" height="1.92" fill="#fff"/><rect x="32.71" y="29.80" width="4.97" height="1.92" fill="#fff"/><rect x="38.58" y="29.80" width="4.97" height="1.92" fill="#fff"/><rect x="3.35" y="33.02" width="4.97" height="1.92" fill="#1e9a35"/><rect x="9.22" y="33.02" width="4.97" height="1.92" fill="#1e9a35"/><rect x="15.09" y="33.02" width="4.97" height="1.92" fill="#1e9a35"/><rect x="20.96" y="33.02" width="4.97" height="1.92" fill="#1e9a35"/><rect x="26.84" y="33.02" width="4.97" height="1.92" fill="#1e9a35"/><rect x="32.71" y="33.02" width="4.97" height="1.92" fill="#1e9a35"/><rect x="38.58" y="33.02" width="4.97" height="1.92" fill="#1e9a35"/><rect x="3.35" y="36.25" width="4.97" height="1.92" fill="#fff"/><rect x="9.22" y="36.25" width="4.97" height="1.92" fill="#fff"/><rect x="15.09" y="36.25" width="4.97" height="1.92" fill="#fff"/><rect x="20.96" y="36.25" width="4.97" height="1.92" fill="#fff"/><rect x="26.84" y="36.25" width="4.97" height="1.92" fill="#fff"/><rect x="32.71" y="36.25" width="4.97" height="1.92" fill="#fff"/><rect x="38.58" y="36.25" width="4.97" height="1.92" fill="#fff"/><rect x="3.35" y="39.47" width="4.97" height="1.92" fill="#fff"/><rect x="9.22" y="39.47" width="4.97" height="1.92" fill="#fff"/><rect x="15.09" y="39.47" width="4.97" height="1.92" fill="#fff"/><rect x="20.96" y="39.47" width="4.97" height="1.92" fill="#fff"/><rect x="26.84" y="39.47" width="4.97" height="1.92" fill="#fff"/><rect x="32.71" y="39.47" width="4.97" height="1.92" fill="#fff"/><rect x="38.58" y="39.47" width="4.97" height="1.92" fill="#fff"/><g transform="translate(27.95,34.2) scale(1.12) rotate(-45)"><path d="M0 0 L3.6 -3.6 L17 -3.6 L17 3.6 L3.6 3.6 Z" fill="#1e9a35" stroke="#fff" stroke-opacity="0.75" stroke-width="1.6" paint-order="stroke" stroke-linejoin="round"/><path d="M17.8 -3.6 H20 Q21.4 -3.6 21.4 -2.2 V2.2 Q21.4 3.6 20 3.6 H17.8 Z" fill="#1e9a35" stroke="#fff" stroke-opacity="0.75" stroke-width="1.6" paint-order="stroke"/><path d="M4.7 -1.5 V1.7" stroke="#fff" stroke-width="1.5" stroke-linecap="round"/><path d="M7 -1.4 H15" stroke="#fff" stroke-width="0.7" stroke-dasharray="0.9,0.5" opacity="0.9"/></g></svg>
<svg class="abs" style="left:41px;top:297px" width="50" height="42" viewBox="0 0 50 42"><path d="M1.5 26 L9.8 8.6" stroke="#d01010" stroke-width="2.2" stroke-linecap="round"/><path d="M1.7 23.4 L9.5 11.5" stroke="#2f54a8" stroke-width="2.3" stroke-linecap="round"/><path d="M43.4 24.2 L48.4 19.2" stroke="#e05050" stroke-width="2" stroke-linecap="round"/><path d="M43.1 22.5 L48.1 17.6" stroke="#2f54a8" stroke-width="2.2" stroke-linecap="round"/><circle cx="26.7" cy="18.8" r="13.7" fill="#fff"/><path d="M16.1 14.3 L18.1 25.8 M23.9 29.1 L29.2 21.7 M34 19 L35 24" stroke="#d01010" stroke-width="1.5" stroke-linecap="round"/><path d="M31.2 10 V13" stroke="#d01010" stroke-width="2.6" stroke-linecap="round"/><path d="M21.6 27.6 L31.2 12.9 L36 23" fill="none" stroke="#2f54a8" stroke-width="3.6" stroke-linejoin="miter"/><circle cx="26.7" cy="18.8" r="13.7" fill="none" stroke="#333" stroke-width="3.7"/><path d="M38.2 29.9 L47 39.2" stroke="#333" stroke-width="3.8" stroke-linecap="round"/></svg>
<svg class="abs" style="left:42px;top:378px" width="48" height="44" viewBox="0 0 48 44"><rect x="6.93" y="1.85" width="37.1" height="32.5" rx="3" fill="#fff" stroke="#333" stroke-width="1.1"/><rect x="5.61" y="3.3" width="37.1" height="32.5" rx="3" fill="#fff" stroke="#333" stroke-width="1.1"/><rect x="4.29" y="4.75" width="37.1" height="32.5" rx="3" fill="#fff" stroke="#333" stroke-width="1.1"/><rect x="2.97" y="6.2" width="37.1" height="32.5" rx="3" fill="#fff" stroke="#333" stroke-width="1.1"/><rect x="1.65" y="7.65" width="37.1" height="32.5" rx="3" fill="#fff" stroke="#333" stroke-width="1.1"/><path d="M3.9 32.5 L9.1 18.6" stroke="#d01010" stroke-width="1.5" stroke-linecap="round"/><path d="M3.6 31.3 L8.9 19.8" stroke="#2f54a8" stroke-width="1.7" stroke-linecap="round"/><path d="M32.9 28.8 L34.2 30.3 L36.6 26.6" fill="none" stroke="#e05050" stroke-width="1.3"/><path d="M32.7 27.6 L34 29.2 L36.4 25.6" fill="none" stroke="#2f54a8" stroke-width="1.5"/><path d="M17.8 17 L19.6 24 M23 27 L27.2 19.3" stroke="#d01010" stroke-width="1.4" stroke-linecap="round"/><path d="M14.8 20.5 L16.3 19 L20.9 28.4 L26.2 18.6" fill="none" stroke="#2f54a8" stroke-width="2.5"/><circle cx="21.2" cy="23.5" r="9" fill="none" stroke="#2e2e2e" stroke-width="2.5"/><path d="M27.8 30.1 L34.6 36.4" stroke="#2e2e2e" stroke-width="2.9" stroke-linecap="round"/></svg>
<svg class="abs" style="left:43px;top:462px" width="48" height="40" viewBox="0 0 48 40"><path d="M3 35.8 L8.7 13.7 L14.9 29.3 L20.6 5.5 L26 22.7 L31.7 7.1 L36.6 32.6 L42.8 17" fill="none" stroke="#cc0808" stroke-width="2.1" stroke-linejoin="round" stroke-linecap="round"/><path d="M2.6 30.5 L9.6 18.6 L14.9 24.8 L21.5 10.8 L27.2 20.7 L32.1 13.7 L37.5 27.2 L43.6 20.7" fill="none" stroke="#2f54a8" stroke-width="2.4" stroke-linejoin="round" stroke-linecap="round"/></svg>

<div class="navbtn" style="top:543px"><span style="letter-spacing:-0.617px;-webkit-text-stroke:0.25px #000">Data</span></div>
<div class="navbtn" style="top:578px;height:37px;background:#5b87d5;color:#fff;border-top-color:#5b87d5;padding-top:1px"><span style="letter-spacing:-0.039px;top:10.3px">Projects (1)</span></div>
<div class="navbtn" style="top:614px;height:35px"><span style="letter-spacing:-0.362px;top:10.3px;-webkit-text-stroke:0.25px #000">Models</span></div>
<svg class="abs" style="left:7px;top:549px" width="24" height="24" viewBox="0 0 24 24"><path d="M8.4 1.5 H16.9 L20.1 4.7 V15.7 Q20.1 17.2 18.6 17.2 H8.4 Q6.9 17.2 6.9 15.7 V3 Q6.9 1.5 8.4 1.5 Z" fill="#fff" stroke="#444" stroke-width="0.9"/><path d="M7 2.9 H15.5 L18.7 6.1 V17.1 Q18.7 18.6 17.2 18.6 H7 Q5.5 18.6 5.5 17.1 V4.4 Q5.5 2.9 7 2.9 Z" fill="#fff" stroke="#444" stroke-width="0.9"/><path d="M5.6 4.3 H14.1 L17.3 7.5 V18.5 Q17.3 20 15.8 20 H5.6 Q4.1 20 4.1 18.5 V5.8 Q4.1 4.3 5.6 4.3 Z" fill="#fff" stroke="#444" stroke-width="0.9"/><path d="M4.2 5.7 H12.7 L15.9 8.9 V19.9 Q15.9 21.4 14.4 21.4 H4.2 Q2.7 21.4 2.7 19.9 V7.2 Q2.7 5.7 4.2 5.7 Z" fill="#fff" stroke="#444" stroke-width="0.9"/><g stroke="#6d8fe0" stroke-width="1.3" stroke-dasharray="1.6,0.7"><path d="M4.6 19.8 V11.8"/><path d="M6.9 19.8 V8.8"/><path d="M9.2 19.8 V10.8"/><path d="M11.5 19.8 V9.8"/><path d="M13.8 19.8 V12.8"/></g></svg>
<svg class="abs" style="left:5px;top:583px" width="26" height="26" viewBox="0 0 26 26"><rect x="6.09" y="1.79" width="18.1" height="18.3" rx="2.5" fill="#fff" stroke="#444" stroke-width="0.9"/><rect x="4.66" y="3.16" width="18.1" height="18.3" rx="2.5" fill="#fff" stroke="#444" stroke-width="0.9"/><rect x="3.23" y="4.53" width="18.1" height="18.3" rx="2.5" fill="#fff" stroke="#444" stroke-width="0.9"/><rect x="1.8" y="5.9" width="18.1" height="18.3" rx="2.5" fill="#fff" stroke="#444" stroke-width="0.9"/><g fill="#2b4fa9"><rect x="4.5" y="11.1" width="1.8" height="3.5"/><rect x="7.45" y="8.6" width="1.8" height="6"/><rect x="10.4" y="10" width="1.8" height="4.6"/><rect x="13.35" y="7.8" width="1.8" height="6.8"/><rect x="16.3" y="11.1" width="1.8" height="3.5"/></g><path d="M4.2 17.1 H9.7 M4.2 19.6 H9.7 M4.2 22.1 H9.7 M11.7 17.1 H18 M11.7 19.6 H18 M11.7 22.1 H18" stroke="#222" stroke-width="1.2"/></svg>
<svg class="abs" style="left:5px;top:619px" width="26" height="26" viewBox="0 0 26 26"><rect x="6.09" y="1.79" width="18.1" height="18.3" rx="2.5" fill="#fff" stroke="#444" stroke-width="0.9"/><rect x="4.66" y="3.16" width="18.1" height="18.3" rx="2.5" fill="#fff" stroke="#444" stroke-width="0.9"/><rect x="3.23" y="4.53" width="18.1" height="18.3" rx="2.5" fill="#fff" stroke="#444" stroke-width="0.9"/><rect x="1.8" y="5.9" width="18.1" height="18.3" rx="2.5" fill="#fff" stroke="#444" stroke-width="0.9"/><path d="M3.5 18 L6 12.5 L8 15.5 L10.3 10.5 L12.3 16 L14.3 12 L16.3 18.5 L18.5 14.5" fill="none" stroke="#e02020" stroke-width="2.6" stroke-dasharray="1.3,2.2" opacity="0.85"/><path d="M3.5 18 L6 12.5 L8 15.5 L10.3 10.5 L12.3 16 L14.3 12 L16.3 18.5 L18.5 14.5" fill="none" stroke="#2a4fb0" stroke-width="1.2"/></svg>

<!-- main panel -->
<div class="abs" style="left:149px;top:115px;width:1130px;height:535px;background:#fff"></div>
<!-- nav arrows -->
<svg class="abs" style="left:486px;top:119px" width="50" height="20" viewBox="0 0 50 20"><rect x="1" y="1.5" width="3.5" height="17" fill="#b4b4b4"/><path d="M19 1V19L4.5 10Z" fill="#b4b4b4"/><path d="M47 1V19L31.5 10Z" fill="#b4b4b4"/></svg>
<svg class="abs" style="left:779px;top:119px" width="50" height="20" viewBox="0 0 50 20"><path d="M1 1V19L16.5 10Z" fill="#3f78d2"/><path d="M30 1V19L44.5 10Z" fill="#3f78d2"/><rect x="44.5" y="1.5" width="3.5" height="17" fill="#3f78d2"/></svg>
<div class="t" style="letter-spacing:-0.333px;left:577.5px;top:121px;font-size:16.5px">Model ranked 1 of 356</div>
<div class="btn" style="letter-spacing:-0.251px;left:1160px;top:118px;width:104px;height:25px;line-height:24px">Filter Models</div>

<!-- outer tab page -->
<div class="abs" style="left:150px;top:164px;width:1127px;height:485px;border:1px solid #dcdcdc;border-left:none;background:#fff"></div>
<div class="tab" style="letter-spacing:-0.267px;left:151px;width:86px">Model Definition</div>
<div class="tab" style="letter-spacing:-0.281px;left:236px;width:136px">Advanced Model Statistics</div>
<div class="tab" style="letter-spacing:-0.362px;left:371px;width:94px">Response Curves</div>
<div class="tab sel" style="letter-spacing:-0.391px;left:464px;width:84px">Brand Painting</div>
<div class="tab" style="letter-spacing:-0.133px;left:547px;width:73px">Contributions</div>
<div class="tab" style="letter-spacing:-0.100px;left:619px;width:121px">Return On Investment</div>
<div class="tab" style="letter-spacing:-0.409px;left:739px;width:98px">Period Comparison</div>

<div class="t" style="letter-spacing:-0.305px;left:162px;top:172.6px">Cross Section to View</div>
<div class="t" style="letter-spacing:-0.441px;left:346px;top:172.6px">Display From</div>
<div class="t" style="letter-spacing:-0.185px;left:462px;top:172.6px">Display To</div>
<div class="t" style="letter-spacing:-0.496px;left:578px;top:172.6px">Group By</div>
<div class="combo" style="left:162px;top:187px;width:176px"><span style="letter-spacing:-0.235px">Overall</span><svg width="9" height="6" viewBox="0 0 9 6"><path d="M0.5 0.6L4.5 4.8L8.5 0.6" fill="none" stroke="#404040" stroke-width="1.05"/></svg></div>
<div class="combo" style="left:346px;top:187px;width:108px"><span style="letter-spacing:-0.036px">02/01/2013</span><svg width="9" height="6" viewBox="0 0 9 6"><path d="M0.5 0.6L4.5 4.8L8.5 0.6" fill="none" stroke="#404040" stroke-width="1.05"/></svg></div>
<div class="combo" style="left:462px;top:187px;width:108px"><span style="letter-spacing:-0.036px">17/02/2016</span><svg width="9" height="6" viewBox="0 0 9 6"><path d="M0.5 0.6L4.5 4.8L8.5 0.6" fill="none" stroke="#404040" stroke-width="1.05"/></svg></div>
<div class="combo" style="left:578px;top:187px;width:108px"><span style="letter-spacing:-0.515px">Series</span><svg width="9" height="6" viewBox="0 0 9 6"><path d="M0.5 0.6L4.5 4.8L8.5 0.6" fill="none" stroke="#404040" stroke-width="1.05"/></svg></div>
<!-- chart type toggles -->
<div class="abs" style="left:726px;top:188px;width:22px;height:20px;border:1px solid #c6c6c6;background:#fff"></div>
<svg class="abs" style="left:729px;top:190px" width="17" height="15" viewBox="0 0 17 15"><rect x="0" y="7" width="2.05" height="6.6" fill="#a9c2ff"/><rect x="2.1" y="5.1" width="2.05" height="8.5" fill="#b4caff"/><rect x="4" y="1.2" width="2.05" height="12.4" fill="#a9c2ff"/><rect x="6.1" y="4.1" width="2.05" height="9.5" fill="#bdd0ff"/><rect x="8" y="3" width="2.05" height="10.6" fill="#b0c7ff"/><rect x="10.1" y="7" width="2.05" height="6.6" fill="#bdd0ff"/><rect x="12" y="4.1" width="2.05" height="9.5" fill="#a9c2ff"/><rect x="14.1" y="2.2" width="2.05" height="11.4" fill="#a4beff"/></svg>
<div class="abs" style="left:750px;top:188px;width:23px;height:20px;border:1.4px solid #147bd9;border-radius:0.8px;background:#e5f1fb"></div>
<svg class="abs" style="left:753px;top:190px" width="17" height="15" viewBox="0 0 17 15"><path d="M1 13.6 V7.3 L5.2 0.9 L8.2 4.1 L9.5 3 L11.35 7 L15.9 2 V13.6 Z" fill="#6695ff"/></svg>
<div class="btn" style="left:1160px;top:179px;width:104px;height:37px;padding-top:5px"><span style="letter-spacing:-0.118px">Contributions</span><br><span style="letter-spacing:-0.232px">Manager</span></div>

<div class="cb" style="left:162px;top:220px"></div>
<div class="t" style="letter-spacing:-0.241px;left:178px;top:221px">Exclude Contribution from Prior Periods</div>

<!-- inner tab page -->
<div class="abs" style="left:153px;top:262px;width:1120px;height:383px;border:1px solid #dcdcdc;background:#fff"></div>
<div class="tab" style="letter-spacing:-0.369px;left:154px;top:245px;height:17px;width:79px;padding-top:3px">Brand Painting</div>
<div class="tab sel" style="letter-spacing:-0.148px;left:232px;top:242px;width:126px;height:21px">Individual Contributions</div>
<div class="tab" style="letter-spacing:-0.226px;left:357px;top:245px;height:17px;width:129px;padding-top:3px">Contributions Breakdown</div>

<div class="t" style="letter-spacing:-0.274px;left:162px;top:275px">Driver</div>
<div class="combo" style="left:196px;top:270px;width:212px;background:#fff;border-color:#7a7a7a"><span style="letter-spacing:-0.446px;top:4px">TV (local)</span><svg width="9" height="6" viewBox="0 0 9 6"><path d="M0.5 0.6L4.5 4.8L8.5 0.6" fill="none" stroke="#404040" stroke-width="1.05"/></svg></div>
<div class="cb" style="left:417px;top:274px"></div>
<svg class="abs" style="left:418px;top:275px" width="11" height="11" viewBox="0 0 11 11"><path d="M1.5 5.5L4.2 8.5L9.5 2" fill="none" stroke="#222" stroke-width="1.3"/></svg>
<div class="t" style="letter-spacing:-0.264px;left:433px;top:275.5px">All Other Unit Sales</div>
<div class="cb" style="left:599px;top:274px"></div>
<div class="t" style="letter-spacing:-0.313px;left:615px;top:275.5px">Total Unit Sales Line</div>
<div class="cb" style="left:778px;top:274px;border-color:#1f6fd6"></div>
<svg class="abs" style="left:779px;top:275px" width="11" height="11" viewBox="0 0 11 11"><path d="M1.5 5.5L4.2 8.5L9.5 2" fill="none" stroke="#1f6fd6" stroke-width="1.3"/></svg>
<div class="t" style="letter-spacing:-0.414px;left:794px;top:275.5px">TV (local) Values</div>

<!-- chart container -->
<div class="abs" style="left:162px;top:297px;width:1104px;height:340px;border:1px solid #c6d3e6;background:#fff"></div>
<svg class="chart" width="1280" height="670" viewBox="0 0 1280 670" style="position:absolute;left:0;top:0;pointer-events:none">
<line x1="260" x2="1231" y1="424.5" y2="424.5" stroke="#d6d6d6" stroke-width="1" stroke-dasharray="3,1.5"/>
<line x1="260" x2="1231" y1="407.5" y2="407.5" stroke="#d6d6d6" stroke-width="1" stroke-dasharray="3,1.5"/>
<line x1="260" x2="1231" y1="390.5" y2="390.5" stroke="#d6d6d6" stroke-width="1" stroke-dasharray="3,1.5"/>
<line x1="260" x2="1231" y1="372.5" y2="372.5" stroke="#d6d6d6" stroke-width="1" stroke-dasharray="3,1.5"/>
<line x1="260" x2="1231" y1="355.5" y2="355.5" stroke="#d6d6d6" stroke-width="1" stroke-dasharray="3,1.5"/>
<line x1="260" x2="1231" y1="337.5" y2="337.5" stroke="#d6d6d6" stroke-width="1" stroke-dasharray="3,1.5"/>
<line x1="260" x2="1231" y1="464.5" y2="464.5" stroke="#d6d6d6" stroke-width="1" stroke-dasharray="3,1.5"/>
<line x1="260" x2="1231" y1="491.5" y2="491.5" stroke="#d6d6d6" stroke-width="1" stroke-dasharray="3,1.5"/>
<path d="M264.00,441.50 L264.00,373.12 L268.75,373.75 L275.00,373.12 L281.88,373.75 L287.50,358.12 L293.12,353.75 L299.38,350.62 L305.00,351.25 L311.25,358.75 L316.88,361.88 L325.00,363.12 L334.38,365.25 L340.00,368.12 L346.25,369.00 L352.50,370.00 L358.75,367.50 L364.38,357.75 L370.00,355.62 L375.62,355.00 L381.88,357.50 L392.50,345.62 L397.50,346.50 L405.00,346.50 L410.62,341.88 L416.88,333.50 L426.25,333.50 L433.75,333.50 L440.62,341.25 L445.62,342.50 L457.50,342.50 L463.75,348.12 L470.00,355.00 L475.62,358.12 L481.25,358.12 L487.50,359.12 L493.12,366.88 L498.75,366.88 L505.00,368.12 L510.62,367.88 L516.88,370.00 L522.50,371.88 L528.75,371.88 L534.38,371.50 L540.62,376.25 L546.25,378.75 L550.00,379.00 L557.50,379.00 L564.38,379.75 L570.00,377.75 L575.62,380.00 L580.00,379.62 L588.12,379.62 L593.75,368.12 L600.00,359.38 L605.00,360.38 L611.25,360.38 L616.88,365.00 L623.12,368.12 L627.50,367.88 L633.75,368.75 L639.38,368.75 L645.62,371.25 L651.88,373.12 L657.50,371.88 L663.75,372.75 L669.38,364.38 L675.62,359.38 L681.25,361.25 L686.88,361.50 L693.12,356.88 L699.38,348.12 L705.00,348.38 L711.25,349.38 L716.88,347.50 L723.12,340.62 L728.75,336.88 L735.00,335.25 L740.00,334.75 L746.25,342.50 L751.25,342.50 L758.75,342.50 L763.75,341.50 L770.00,344.75 L775.62,351.25 L781.25,351.25 L786.88,354.38 L793.75,352.75 L799.38,365.62 L805.00,369.00 L811.25,369.75 L816.88,370.62 L823.12,373.75 L828.75,375.62 L835.00,376.50 L840.00,376.25 L846.25,378.50 L852.50,385.62 L858.75,385.62 L864.38,385.62 L870.62,384.38 L876.25,383.50 L881.88,383.50 L887.50,382.75 L893.12,382.75 L900.00,372.25 L905.00,364.00 L910.62,363.12 L916.25,364.00 L922.50,366.00 L928.12,371.62 L933.75,371.88 L940.00,373.12 L945.62,373.12 L951.88,374.12 L957.50,371.50 L963.75,371.50 L970.00,371.50 L975.62,365.62 L981.88,358.12 L987.50,360.38 L993.12,361.25 L999.38,357.75 L1005.00,346.50 L1010.62,347.25 L1016.25,347.25 L1023.12,348.12 L1029.00,335.62 L1035.00,340.62 L1040.62,341.50 L1046.25,342.50 L1052.50,348.12 L1057.50,348.12 L1060.00,348.91 L1064.22,349.61 L1075.47,349.61 L1081.80,357.34 L1088.13,359.45 L1093.75,360.16 L1100.08,359.03 L1105.00,368.31 L1111.33,370.00 L1116.25,370.99 L1121.88,370.99 L1127.50,372.11 L1133.13,373.80 L1139.45,374.22 L1145.78,375.20 L1152.11,376.75 L1157.74,384.77 L1164.06,384.77 L1170.39,384.77 L1176.72,383.78 L1181.64,383.78 L1187.27,381.95 L1193.60,382.94 L1199.22,381.95 L1205.55,375.63 L1211.17,362.27 L1216.80,361.28 L1222.85,360.16 L1222.85,441.50 Z" fill="#fbcb25"/>
<path d="M264.00,441.50 L264.00,374.38 L268.75,375.25 L275.00,374.38 L281.88,375.25 L287.50,360.00 L293.12,355.25 L299.38,354.00 L305.00,355.00 L311.25,360.62 L316.88,363.12 L325.00,364.75 L334.38,367.50 L340.00,370.00 L346.25,370.25 L352.50,371.00 L358.75,369.38 L364.38,360.00 L370.00,358.75 L375.62,359.38 L381.88,359.38 L392.50,346.88 L397.50,348.12 L405.00,347.88 L410.62,345.00 L416.88,336.88 L426.25,337.50 L433.75,337.50 L440.62,345.00 L445.62,345.62 L457.50,345.62 L463.75,350.00 L470.00,356.88 L475.62,359.38 L481.25,359.12 L487.50,360.38 L493.12,368.12 L498.75,368.12 L505.00,369.00 L510.62,368.75 L516.88,371.00 L522.50,373.12 L528.75,372.75 L534.38,372.50 L540.62,377.50 L546.25,380.00 L550.00,380.88 L557.50,380.62 L564.38,380.88 L570.00,379.00 L575.62,381.88 L580.00,381.50 L588.12,381.00 L593.75,369.38 L600.00,361.50 L605.00,361.62 L611.25,361.25 L616.88,366.25 L623.12,369.00 L627.50,369.00 L633.75,370.00 L639.38,369.75 L645.62,372.25 L651.88,374.12 L657.50,373.38 L663.75,374.00 L669.38,365.62 L675.62,361.88 L681.25,363.50 L686.88,364.75 L693.12,360.00 L699.38,351.00 L705.00,350.88 L711.25,350.62 L716.88,349.75 L723.12,343.12 L728.75,342.25 L735.00,341.00 L740.00,341.00 L746.25,348.50 L751.25,349.38 L758.75,349.38 L763.75,348.75 L770.00,351.88 L775.62,355.62 L781.25,355.38 L786.88,356.50 L793.75,355.62 L799.38,367.50 L805.00,371.00 L811.25,371.25 L816.88,371.88 L823.12,374.75 L828.75,376.88 L835.00,377.50 L840.00,377.25 L846.25,379.38 L852.50,386.50 L858.75,386.50 L864.38,386.25 L870.62,385.00 L876.25,384.38 L881.88,384.38 L887.50,383.50 L893.12,383.50 L900.00,373.50 L905.00,365.25 L910.62,364.75 L916.25,365.62 L922.50,368.75 L928.12,373.12 L933.75,372.88 L940.00,374.00 L945.62,374.00 L951.88,375.00 L957.50,374.00 L963.75,374.38 L970.00,374.38 L975.62,368.12 L981.88,361.88 L987.50,365.62 L993.12,364.75 L999.38,361.88 L1005.00,351.88 L1010.62,352.75 L1016.25,352.75 L1023.12,353.75 L1029.00,342.50 L1035.00,343.75 L1040.62,343.12 L1046.25,343.50 L1052.50,349.38 L1057.50,349.38 L1060.00,350.03 L1064.22,350.59 L1075.47,350.59 L1081.80,358.47 L1088.13,360.44 L1093.75,361.28 L1100.08,360.16 L1105.00,369.30 L1111.33,371.13 L1116.25,371.83 L1121.88,371.83 L1127.50,373.52 L1133.13,374.92 L1139.45,375.20 L1145.78,376.33 L1152.11,377.74 L1157.74,385.75 L1164.06,385.75 L1170.39,385.75 L1176.72,384.77 L1181.64,384.77 L1187.27,382.94 L1193.60,383.78 L1199.22,382.94 L1205.55,377.03 L1211.17,363.67 L1216.80,362.69 L1222.85,361.56 L1222.85,441.50 Z" fill="#8299fb"/>
<rect x="262.20" y="504.25" width="4.6" height="14.75" fill="#fbcb25"/>
<rect x="268.08" y="511.00" width="4.6" height="8.00" fill="#fbcb25"/>
<rect x="273.96" y="512.25" width="4.6" height="6.75" fill="#fbcb25"/>
<rect x="279.85" y="511.00" width="4.6" height="8.00" fill="#fbcb25"/>
<rect x="285.73" y="511.00" width="4.6" height="8.00" fill="#fbcb25"/>
<rect x="291.61" y="513.00" width="4.6" height="6.00" fill="#fbcb25"/>
<rect x="297.49" y="487.75" width="4.6" height="31.25" fill="#fbcb25"/>
<rect x="303.37" y="514.00" width="4.6" height="5.00" fill="#fbcb25"/>
<rect x="309.26" y="516.00" width="4.6" height="3.00" fill="#fbcb25"/>
<rect x="315.14" y="516.00" width="4.6" height="3.00" fill="#fbcb25"/>
<rect x="321.02" y="515.00" width="4.6" height="4.00" fill="#fbcb25"/>
<rect x="326.90" y="516.00" width="4.6" height="3.00" fill="#fbcb25"/>
<rect x="332.78" y="503.25" width="4.6" height="15.75" fill="#fbcb25"/>
<rect x="338.67" y="518.40" width="4.6" height="0.60" fill="#fbcb25"/>
<rect x="344.55" y="518.40" width="4.6" height="0.60" fill="#fbcb25"/>
<rect x="350.43" y="518.40" width="4.6" height="0.60" fill="#fbcb25"/>
<rect x="356.31" y="503.25" width="4.6" height="15.75" fill="#fbcb25"/>
<rect x="362.19" y="501.50" width="4.6" height="17.50" fill="#fbcb25"/>
<rect x="368.08" y="500.50" width="4.6" height="18.50" fill="#fbcb25"/>
<rect x="373.96" y="498.50" width="4.6" height="20.50" fill="#fbcb25"/>
<rect x="379.84" y="513.00" width="4.6" height="6.00" fill="#fbcb25"/>
<rect x="385.72" y="514.00" width="4.6" height="5.00" fill="#fbcb25"/>
<rect x="391.60" y="514.00" width="4.6" height="5.00" fill="#fbcb25"/>
<rect x="397.49" y="513.00" width="4.6" height="6.00" fill="#fbcb25"/>
<rect x="403.37" y="511.00" width="4.6" height="8.00" fill="#fbcb25"/>
<rect x="409.25" y="502.25" width="4.6" height="16.75" fill="#fbcb25"/>
<rect x="415.13" y="499.25" width="4.6" height="19.75" fill="#fbcb25"/>
<rect x="421.01" y="500.25" width="4.6" height="18.75" fill="#fbcb25"/>
<rect x="426.90" y="491.50" width="4.6" height="27.50" fill="#fbcb25"/>
<rect x="432.78" y="491.50" width="4.6" height="27.50" fill="#fbcb25"/>
<rect x="438.66" y="500.25" width="4.6" height="18.75" fill="#fbcb25"/>
<rect x="444.54" y="506.25" width="4.6" height="12.75" fill="#fbcb25"/>
<rect x="450.42" y="507.25" width="4.6" height="11.75" fill="#fbcb25"/>
<rect x="456.31" y="502.25" width="4.6" height="16.75" fill="#fbcb25"/>
<rect x="462.19" y="510.25" width="4.6" height="8.75" fill="#fbcb25"/>
<rect x="468.07" y="517.00" width="4.6" height="2.00" fill="#fbcb25"/>
<rect x="473.95" y="518.40" width="4.6" height="0.60" fill="#fbcb25"/>
<rect x="479.83" y="518.40" width="4.6" height="0.60" fill="#fbcb25"/>
<rect x="485.72" y="518.40" width="4.6" height="0.60" fill="#fbcb25"/>
<rect x="491.60" y="518.40" width="4.6" height="0.60" fill="#fbcb25"/>
<rect x="497.48" y="518.40" width="4.6" height="0.60" fill="#fbcb25"/>
<rect x="503.36" y="518.40" width="4.6" height="0.60" fill="#fbcb25"/>
<rect x="509.24" y="518.40" width="4.6" height="0.60" fill="#fbcb25"/>
<rect x="515.13" y="518.40" width="4.6" height="0.60" fill="#fbcb25"/>
<rect x="521.01" y="518.40" width="4.6" height="0.60" fill="#fbcb25"/>
<rect x="526.89" y="518.40" width="4.6" height="0.60" fill="#fbcb25"/>
<rect x="532.77" y="518.40" width="4.6" height="0.60" fill="#fbcb25"/>
<rect x="538.65" y="511.00" width="4.6" height="8.00" fill="#fbcb25"/>
<rect x="544.54" y="513.00" width="4.6" height="6.00" fill="#fbcb25"/>
<rect x="550.42" y="507.25" width="4.6" height="11.75" fill="#fbcb25"/>
<rect x="556.30" y="507.25" width="4.6" height="11.75" fill="#fbcb25"/>
<rect x="562.18" y="509.25" width="4.6" height="9.75" fill="#fbcb25"/>
<rect x="568.06" y="513.00" width="4.6" height="6.00" fill="#fbcb25"/>
<rect x="573.95" y="514.00" width="4.6" height="5.00" fill="#fbcb25"/>
<rect x="579.83" y="512.25" width="4.6" height="6.75" fill="#fbcb25"/>
<rect x="585.71" y="509.25" width="4.6" height="9.75" fill="#fbcb25"/>
<rect x="591.59" y="507.25" width="4.6" height="11.75" fill="#fbcb25"/>
<rect x="597.47" y="512.25" width="4.6" height="6.75" fill="#fbcb25"/>
<rect x="603.36" y="518.40" width="4.6" height="0.60" fill="#fbcb25"/>
<rect x="609.24" y="517.00" width="4.6" height="2.00" fill="#fbcb25"/>
<rect x="615.12" y="517.00" width="4.6" height="2.00" fill="#fbcb25"/>
<rect x="621.00" y="518.40" width="4.6" height="0.60" fill="#fbcb25"/>
<rect x="626.88" y="518.40" width="4.6" height="0.60" fill="#fbcb25"/>
<rect x="632.77" y="518.40" width="4.6" height="0.60" fill="#fbcb25"/>
<rect x="638.65" y="518.40" width="4.6" height="0.60" fill="#fbcb25"/>
<rect x="644.53" y="518.40" width="4.6" height="0.60" fill="#fbcb25"/>
<rect x="650.41" y="518.40" width="4.6" height="0.60" fill="#fbcb25"/>
<rect x="656.29" y="518.40" width="4.6" height="0.60" fill="#fbcb25"/>
<rect x="662.18" y="518.40" width="4.6" height="0.60" fill="#fbcb25"/>
<rect x="668.06" y="518.40" width="4.6" height="0.60" fill="#fbcb25"/>
<rect x="673.94" y="505.25" width="4.6" height="13.75" fill="#fbcb25"/>
<rect x="679.82" y="505.25" width="4.6" height="13.75" fill="#fbcb25"/>
<rect x="685.70" y="505.25" width="4.6" height="13.75" fill="#fbcb25"/>
<rect x="691.59" y="501.50" width="4.6" height="17.50" fill="#fbcb25"/>
<rect x="697.47" y="511.00" width="4.6" height="8.00" fill="#fbcb25"/>
<rect x="703.35" y="509.25" width="4.6" height="9.75" fill="#fbcb25"/>
<rect x="709.23" y="515.00" width="4.6" height="4.00" fill="#fbcb25"/>
<rect x="715.11" y="509.25" width="4.6" height="9.75" fill="#fbcb25"/>
<rect x="721.00" y="510.25" width="4.6" height="8.75" fill="#fbcb25"/>
<rect x="726.88" y="476.00" width="4.6" height="43.00" fill="#fbcb25"/>
<rect x="732.76" y="474.00" width="4.6" height="45.00" fill="#fbcb25"/>
<rect x="738.64" y="476.00" width="4.6" height="43.00" fill="#fbcb25"/>
<rect x="744.52" y="482.75" width="4.6" height="36.25" fill="#fbcb25"/>
<rect x="750.41" y="461.00" width="4.6" height="58.00" fill="#fbcb25"/>
<rect x="756.29" y="457.75" width="4.6" height="61.25" fill="#fbcb25"/>
<rect x="762.17" y="459.75" width="4.6" height="59.25" fill="#fbcb25"/>
<rect x="768.05" y="456.00" width="4.6" height="63.00" fill="#fbcb25"/>
<rect x="773.93" y="518.40" width="4.6" height="0.60" fill="#fbcb25"/>
<rect x="779.82" y="501.50" width="4.6" height="17.50" fill="#fbcb25"/>
<rect x="785.70" y="518.40" width="4.6" height="0.60" fill="#fbcb25"/>
<rect x="791.58" y="494.75" width="4.6" height="24.25" fill="#fbcb25"/>
<rect x="797.46" y="518.40" width="4.6" height="0.60" fill="#fbcb25"/>
<rect x="803.34" y="508.25" width="4.6" height="10.75" fill="#fbcb25"/>
<rect x="809.23" y="515.00" width="4.6" height="4.00" fill="#fbcb25"/>
<rect x="815.11" y="518.40" width="4.6" height="0.60" fill="#fbcb25"/>
<rect x="820.99" y="518.40" width="4.6" height="0.60" fill="#fbcb25"/>
<rect x="826.87" y="518.40" width="4.6" height="0.60" fill="#fbcb25"/>
<rect x="832.75" y="518.40" width="4.6" height="0.60" fill="#fbcb25"/>
<rect x="838.64" y="518.40" width="4.6" height="0.60" fill="#fbcb25"/>
<rect x="844.52" y="518.40" width="4.6" height="0.60" fill="#fbcb25"/>
<rect x="850.40" y="518.40" width="4.6" height="0.60" fill="#fbcb25"/>
<rect x="856.28" y="518.40" width="4.6" height="0.60" fill="#fbcb25"/>
<rect x="862.16" y="518.40" width="4.6" height="0.60" fill="#fbcb25"/>
<rect x="868.05" y="518.40" width="4.6" height="0.60" fill="#fbcb25"/>
<rect x="873.93" y="518.40" width="4.6" height="0.60" fill="#fbcb25"/>
<rect x="879.81" y="518.40" width="4.6" height="0.60" fill="#fbcb25"/>
<rect x="885.69" y="518.40" width="4.6" height="0.60" fill="#fbcb25"/>
<rect x="891.57" y="518.40" width="4.6" height="0.60" fill="#fbcb25"/>
<rect x="897.46" y="518.40" width="4.6" height="0.60" fill="#fbcb25"/>
<rect x="903.34" y="517.00" width="4.6" height="2.00" fill="#fbcb25"/>
<rect x="909.22" y="508.25" width="4.6" height="10.75" fill="#fbcb25"/>
<rect x="915.10" y="515.00" width="4.6" height="4.00" fill="#fbcb25"/>
<rect x="920.98" y="505.25" width="4.6" height="13.75" fill="#fbcb25"/>
<rect x="926.87" y="518.40" width="4.6" height="0.60" fill="#fbcb25"/>
<rect x="932.75" y="518.40" width="4.6" height="0.60" fill="#fbcb25"/>
<rect x="938.63" y="518.40" width="4.6" height="0.60" fill="#fbcb25"/>
<rect x="944.51" y="518.40" width="4.6" height="0.60" fill="#fbcb25"/>
<rect x="950.39" y="516.00" width="4.6" height="3.00" fill="#fbcb25"/>
<rect x="956.28" y="505.25" width="4.6" height="13.75" fill="#fbcb25"/>
<rect x="962.16" y="504.25" width="4.6" height="14.75" fill="#fbcb25"/>
<rect x="968.04" y="503.25" width="4.6" height="15.75" fill="#fbcb25"/>
<rect x="973.92" y="511.00" width="4.6" height="8.00" fill="#fbcb25"/>
<rect x="979.80" y="492.50" width="4.6" height="26.50" fill="#fbcb25"/>
<rect x="985.69" y="487.75" width="4.6" height="31.25" fill="#fbcb25"/>
<rect x="991.57" y="499.25" width="4.6" height="19.75" fill="#fbcb25"/>
<rect x="997.45" y="482.75" width="4.6" height="36.25" fill="#fbcb25"/>
<rect x="1003.33" y="485.75" width="4.6" height="33.25" fill="#fbcb25"/>
<rect x="1009.21" y="480.75" width="4.6" height="38.25" fill="#fbcb25"/>
<rect x="1015.10" y="487.75" width="4.6" height="31.25" fill="#fbcb25"/>
<rect x="1020.98" y="492.50" width="4.6" height="26.50" fill="#fbcb25"/>
<rect x="1026.86" y="471.75" width="4.6" height="47.25" fill="#fbcb25"/>
<rect x="1032.74" y="518.40" width="4.6" height="0.60" fill="#fbcb25"/>
<rect x="1038.62" y="518.40" width="4.6" height="0.60" fill="#fbcb25"/>
<rect x="1044.51" y="518.40" width="4.6" height="0.60" fill="#fbcb25"/>
<rect x="1050.39" y="518.40" width="4.6" height="0.60" fill="#fbcb25"/>
<rect x="1056.27" y="518.40" width="4.6" height="0.60" fill="#fbcb25"/>
<rect x="1062.15" y="518.40" width="4.6" height="0.60" fill="#fbcb25"/>
<rect x="1068.03" y="518.40" width="4.6" height="0.60" fill="#fbcb25"/>
<rect x="1073.92" y="518.40" width="4.6" height="0.60" fill="#fbcb25"/>
<rect x="1079.80" y="518.40" width="4.6" height="0.60" fill="#fbcb25"/>
<rect x="1085.68" y="518.40" width="4.6" height="0.60" fill="#fbcb25"/>
<rect x="1091.56" y="518.40" width="4.6" height="0.60" fill="#fbcb25"/>
<rect x="1097.44" y="518.40" width="4.6" height="0.60" fill="#fbcb25"/>
<rect x="1103.33" y="518.40" width="4.6" height="0.60" fill="#fbcb25"/>
<rect x="1109.21" y="518.40" width="4.6" height="0.60" fill="#fbcb25"/>
<rect x="1115.09" y="518.40" width="4.6" height="0.60" fill="#fbcb25"/>
<rect x="1120.97" y="518.40" width="4.6" height="0.60" fill="#fbcb25"/>
<rect x="1126.85" y="511.00" width="4.6" height="8.00" fill="#fbcb25"/>
<rect x="1132.74" y="511.00" width="4.6" height="8.00" fill="#fbcb25"/>
<rect x="1138.62" y="511.00" width="4.6" height="8.00" fill="#fbcb25"/>
<rect x="1144.50" y="518.40" width="4.6" height="0.60" fill="#fbcb25"/>
<rect x="1150.38" y="518.40" width="4.6" height="0.60" fill="#fbcb25"/>
<rect x="1156.26" y="518.40" width="4.6" height="0.60" fill="#fbcb25"/>
<rect x="1162.15" y="518.40" width="4.6" height="0.60" fill="#fbcb25"/>
<rect x="1168.03" y="518.40" width="4.6" height="0.60" fill="#fbcb25"/>
<rect x="1173.91" y="518.40" width="4.6" height="0.60" fill="#fbcb25"/>
<rect x="1179.79" y="518.40" width="4.6" height="0.60" fill="#fbcb25"/>
<rect x="1185.67" y="518.40" width="4.6" height="0.60" fill="#fbcb25"/>
<rect x="1191.56" y="518.40" width="4.6" height="0.60" fill="#fbcb25"/>
<rect x="1197.44" y="518.40" width="4.6" height="0.60" fill="#fbcb25"/>
<rect x="1203.32" y="518.40" width="4.6" height="0.60" fill="#fbcb25"/>
<rect x="1209.20" y="518.40" width="4.6" height="0.60" fill="#fbcb25"/>
<rect x="1215.08" y="514.00" width="4.6" height="5.00" fill="#fbcb25"/>
<rect x="1220.97" y="514.00" width="4.6" height="5.00" fill="#fbcb25"/>
<rect x="258.1" y="329" width="1.25" height="114" fill="#000"/>
<rect x="258.1" y="441.1" width="974" height="1.4" fill="#000"/>
<rect x="258.1" y="451" width="1.25" height="69" fill="#000"/>
<rect x="258.1" y="518.7" width="974" height="1.3" fill="#000" opacity="0.85"/>
<text x="253.9" y="447.2" text-anchor="end" class="ax" style="font-size:10.4px">0</text>
<text x="253.9" y="429.8" text-anchor="end" class="ax" style="font-size:10.4px">20,000</text>
<text x="253.9" y="412.4" text-anchor="end" class="ax" style="font-size:10.4px">40,000</text>
<text x="253.9" y="395.0" text-anchor="end" class="ax" style="font-size:10.4px">60,000</text>
<text x="253.9" y="377.6" text-anchor="end" class="ax" style="font-size:10.4px">80,000</text>
<text x="253.9" y="360.2" text-anchor="end" class="ax" style="font-size:10.4px">100,000</text>
<text x="253.9" y="342.8" text-anchor="end" class="ax" style="font-size:10.4px">120,000</text>
<text x="257.3" y="524.7" text-anchor="end" class="ax" style="font-size:10.4px">0</text>
<text x="257.3" y="496.9" text-anchor="end" class="ax" style="font-size:10.4px">2,000,000</text>
<text x="257.3" y="469.9" text-anchor="end" class="ax" style="font-size:10.4px">4,000,000</text>
<text transform="translate(202,386) rotate(-90)" text-anchor="middle" class="ax">Unit Sales</text>
<text transform="translate(196,485) rotate(-90)" text-anchor="middle" class="ax">TV (local)</text>
<text transform="translate(267.00,583.8) rotate(-90)" class="ax" style="font-size:10.5px">02/01/2013</text>
<text transform="translate(284.65,583.8) rotate(-90)" class="ax" style="font-size:10.5px">23/01/2013</text>
<text transform="translate(302.29,583.8) rotate(-90)" class="ax" style="font-size:10.5px">13/02/2013</text>
<text transform="translate(319.94,583.8) rotate(-90)" class="ax" style="font-size:10.5px">06/03/2013</text>
<text transform="translate(337.58,583.8) rotate(-90)" class="ax" style="font-size:10.5px">27/03/2013</text>
<text transform="translate(355.23,583.8) rotate(-90)" class="ax" style="font-size:10.5px">17/04/2013</text>
<text transform="translate(372.88,583.8) rotate(-90)" class="ax" style="font-size:10.5px">08/05/2013</text>
<text transform="translate(390.52,583.8) rotate(-90)" class="ax" style="font-size:10.5px">29/05/2013</text>
<text transform="translate(408.17,583.8) rotate(-90)" class="ax" style="font-size:10.5px">19/06/2013</text>
<text transform="translate(425.81,583.8) rotate(-90)" class="ax" style="font-size:10.5px">10/07/2013</text>
<text transform="translate(443.46,583.8) rotate(-90)" class="ax" style="font-size:10.5px">31/07/2013</text>
<text transform="translate(461.11,583.8) rotate(-90)" class="ax" style="font-size:10.5px">21/08/2013</text>
<text transform="translate(478.75,583.8) rotate(-90)" class="ax" style="font-size:10.5px">11/09/2013</text>
<text transform="translate(496.40,583.8) rotate(-90)" class="ax" style="font-size:10.5px">02/10/2013</text>
<text transform="translate(514.04,583.8) rotate(-90)" class="ax" style="font-size:10.5px">23/10/2013</text>
<text transform="translate(531.69,583.8) rotate(-90)" class="ax" style="font-size:10.5px">13/11/2013</text>
<text transform="translate(549.34,583.8) rotate(-90)" class="ax" style="font-size:10.5px">04/12/2013</text>
<text transform="translate(566.98,583.8) rotate(-90)" class="ax" style="font-size:10.5px">25/12/2013</text>
<text transform="translate(584.63,583.8) rotate(-90)" class="ax" style="font-size:10.5px">15/01/2014</text>
<text transform="translate(602.27,583.8) rotate(-90)" class="ax" style="font-size:10.5px">05/02/2014</text>
<text transform="translate(619.92,583.8) rotate(-90)" class="ax" style="font-size:10.5px">26/02/2014</text>
<text transform="translate(637.57,583.8) rotate(-90)" class="ax" style="font-size:10.5px">19/03/2014</text>
<text transform="translate(655.21,583.8) rotate(-90)" class="ax" style="font-size:10.5px">09/04/2014</text>
<text transform="translate(672.86,583.8) rotate(-90)" class="ax" style="font-size:10.5px">30/04/2014</text>
<text transform="translate(690.50,583.8) rotate(-90)" class="ax" style="font-size:10.5px">21/05/2014</text>
<text transform="translate(708.15,583.8) rotate(-90)" class="ax" style="font-size:10.5px">11/06/2014</text>
<text transform="translate(725.80,583.8) rotate(-90)" class="ax" style="font-size:10.5px">02/07/2014</text>
<text transform="translate(743.44,583.8) rotate(-90)" class="ax" style="font-size:10.5px">23/07/2014</text>
<text transform="translate(761.09,583.8) rotate(-90)" class="ax" style="font-size:10.5px">13/08/2014</text>
<text transform="translate(778.73,583.8) rotate(-90)" class="ax" style="font-size:10.5px">03/09/2014</text>
<text transform="translate(796.38,583.8) rotate(-90)" class="ax" style="font-size:10.5px">24/09/2014</text>
<text transform="translate(814.03,583.8) rotate(-90)" class="ax" style="font-size:10.5px">15/10/2014</text>
<text transform="translate(831.67,583.8) rotate(-90)" class="ax" style="font-size:10.5px">05/11/2014</text>
<text transform="translate(849.32,583.8) rotate(-90)" class="ax" style="font-size:10.5px">26/11/2014</text>
<text transform="translate(866.96,583.8) rotate(-90)" class="ax" style="font-size:10.5px">17/12/2014</text>
<text transform="translate(884.61,583.8) rotate(-90)" class="ax" style="font-size:10.5px">07/01/2015</text>
<text transform="translate(902.26,583.8) rotate(-90)" class="ax" style="font-size:10.5px">28/01/2015</text>
<text transform="translate(919.90,583.8) rotate(-90)" class="ax" style="font-size:10.5px">18/02/2015</text>
<text transform="translate(937.55,583.8) rotate(-90)" class="ax" style="font-size:10.5px">11/03/2015</text>
<text transform="translate(955.19,583.8) rotate(-90)" class="ax" style="font-size:10.5px">01/04/2015</text>
<text transform="translate(972.84,583.8) rotate(-90)" class="ax" style="font-size:10.5px">22/04/2015</text>
<text transform="translate(990.49,583.8) rotate(-90)" class="ax" style="font-size:10.5px">13/05/2015</text>
<text transform="translate(1008.13,583.8) rotate(-90)" class="ax" style="font-size:10.5px">03/06/2015</text>
<text transform="translate(1025.78,583.8) rotate(-90)" class="ax" style="font-size:10.5px">24/06/2015</text>
<text transform="translate(1043.42,583.8) rotate(-90)" class="ax" style="font-size:10.5px">15/07/2015</text>
<text transform="translate(1061.07,583.8) rotate(-90)" class="ax" style="font-size:10.5px">05/08/2015</text>
<text transform="translate(1078.72,583.8) rotate(-90)" class="ax" style="font-size:10.5px">26/08/2015</text>
<text transform="translate(1096.36,583.8) rotate(-90)" class="ax" style="font-size:10.5px">16/09/2015</text>
<text transform="translate(1114.01,583.8) rotate(-90)" class="ax" style="font-size:10.5px">07/10/2015</text>
<text transform="translate(1131.65,583.8) rotate(-90)" class="ax" style="font-size:10.5px">28/10/2015</text>
<text transform="translate(1149.30,583.8) rotate(-90)" class="ax" style="font-size:10.5px">18/11/2015</text>
<text transform="translate(1166.95,583.8) rotate(-90)" class="ax" style="font-size:10.5px">09/12/2015</text>
<text transform="translate(1184.59,583.8) rotate(-90)" class="ax" style="font-size:10.5px">30/12/2015</text>
<text transform="translate(1202.24,583.8) rotate(-90)" class="ax" style="font-size:10.5px">20/01/2016</text>
<text transform="translate(1219.88,583.8) rotate(-90)" class="ax" style="font-size:10.5px">10/02/2016</text>
<text x="723" y="321" text-anchor="middle" class="ttl">TV (local) For Periods Starting From 02/01/2013 To 17/02/2016 Inclusive - Aggregated Market Model</text>
<rect x="621" y="608" width="11" height="11" fill="#8299fb"/>
<text x="636.2" y="616.8" class="ax" style="font-size:11px">All Other Unit Sales</text>
<rect x="742.5" y="608" width="11" height="11" fill="#fbcb25"/>
<text x="757.5" y="616.8" class="ax" style="font-size:11.2px">TV (local)</text>
</svg>

<!-- status bar -->
<div class="abs" style="left:1px;top:650px;width:1278px;height:19px;background:#e4e9f3"></div>
<div class="sb" style="letter-spacing:-0.592px;left:8px">Generations Run: 13</div>
<div class="abs" style="left:114px;top:651px;width:1px;height:17px;background:#f5f7fb"></div>
<div class="sb" style="letter-spacing:-0.600px;left:121px">Category Template Selected: Default Categories</div>
<div class="abs" style="left:358px;top:651px;width:1px;height:17px;background:#f5f7fb"></div>
<div class="sb" style="letter-spacing:-0.534px;left:364px">Model Rating Template Selected: Default Model Rating</div>
<div class="sb" style="letter-spacing:-0.643px;left:771.5px">C:\Users\Public\Documents\ScanmarQED\Tutorial\Big Cheese Project.mqp</div>
<!-- window right/bottom edges -->
<div class="abs" style="left:1279px;top:0;width:1px;height:670px;background:#555"></div>
<div class="abs" style="left:0;top:669px;width:1280px;height:1px;background:#555"></div>
</body></html>
